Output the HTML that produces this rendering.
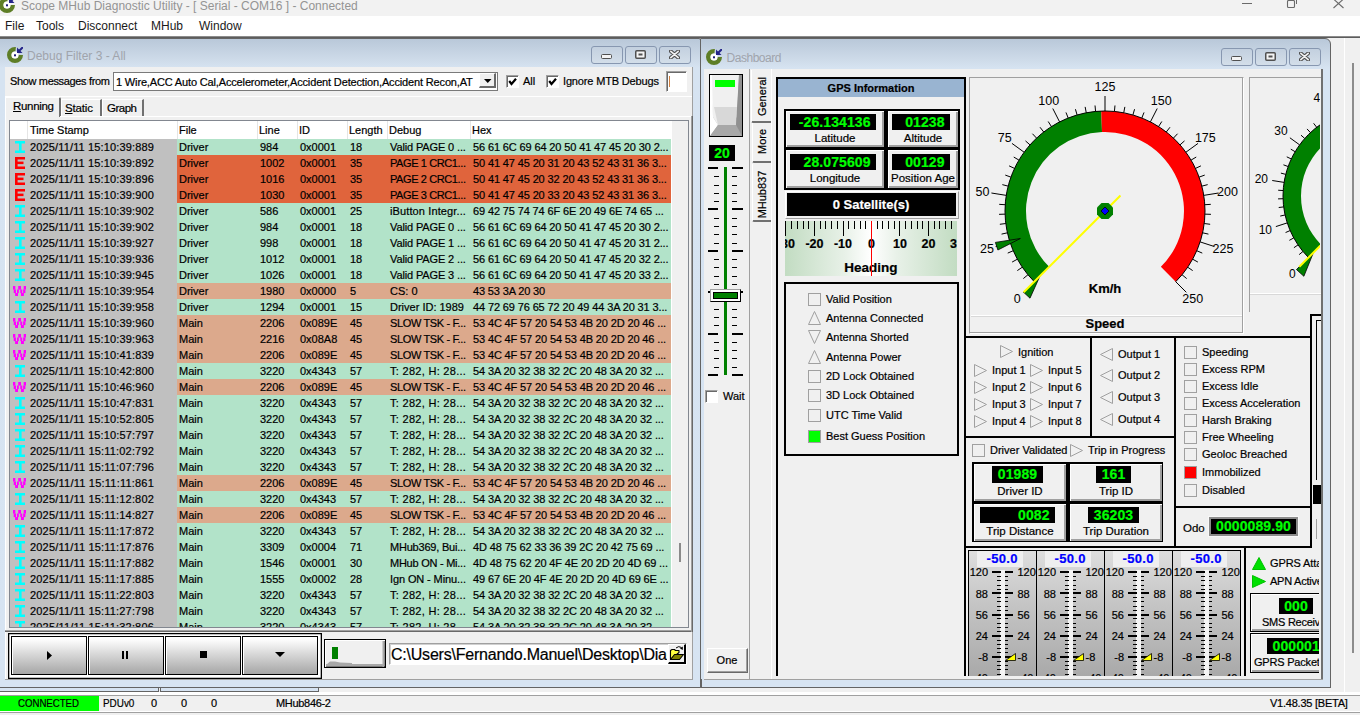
<!DOCTYPE html>
<html><head><meta charset="utf-8"><style>
html,body{margin:0;padding:0;width:1360px;height:715px;overflow:hidden;background:#f0f0f0;position:relative}
body{font-family:"Liberation Sans",sans-serif;font-size:11px;color:#000}
.a{position:absolute;box-sizing:border-box}
.t{white-space:nowrap;-webkit-text-stroke:0.2px currentColor}
svg.a text{font-family:"Liberation Sans",sans-serif}
</style></head><body>
<div class="a" style="left:0px;top:0px;width:1360px;height:16px;background:#f2f2f2"></div>
<svg class="a" style="left:-1px;top:-3px;" width="16" height="16" viewBox="0 0 16 16"><circle cx="8" cy="8" r="5.75" fill="none" stroke="#5e7e26" stroke-width="4.5" stroke-dasharray="27.1 9"/>
<circle cx="8" cy="8" r="3.5" fill="#fff"/>
<rect x="7" y="7.3" width="2" height="2" fill="#1c1c78"/>
<path d="M10 0.5 V6 H15.5 Z" fill="#24248a"/><path d="M12 4 L16 0" stroke="#24248a" stroke-width="2"/></svg>
<div class="a t" style="left:21px;top:-1.0px;line-height:14px;font-size:12px;color:#949494;-webkit-text-stroke:0;">Scope MHub Diagnostic Utility - [ Serial - COM16 ] - Connected</div>
<div class="a" style="left:1242px;top:3px;width:10px;height:1px;background:#6a6a6a"></div>
<svg class="a" style="left:1286px;top:-2px;" width="12" height="10" viewBox="0 0 12 10"><rect x="1.5" y="2.5" width="7" height="7" rx="1" fill="none" stroke="#6a6a6a" stroke-width="1.1"/><path d="M10.5 1 V6" fill="none" stroke="#6a6a6a"/></svg>
<svg class="a" style="left:1333px;top:-1px;" width="11" height="10" viewBox="0 0 11 10"><path d="M0.5 0 L10.5 9 M10.5 0 L0.5 9" stroke="#6a6a6a" stroke-width="1.1"/></svg>
<div class="a" style="left:0px;top:16px;width:1360px;height:20px;background:#fff"></div>
<div class="a t" style="left:5px;top:19.0px;line-height:14px;font-size:12px;-webkit-text-stroke:0;color:#1a1a1a;">File</div>
<div class="a t" style="left:36px;top:19.0px;line-height:14px;font-size:12px;-webkit-text-stroke:0;color:#1a1a1a;">Tools</div>
<div class="a t" style="left:78px;top:19.0px;line-height:14px;font-size:12px;-webkit-text-stroke:0;color:#1a1a1a;">Disconnect</div>
<div class="a t" style="left:151px;top:19.0px;line-height:14px;font-size:12px;-webkit-text-stroke:0;color:#1a1a1a;">MHub</div>
<div class="a t" style="left:199px;top:19.0px;line-height:14px;font-size:12px;-webkit-text-stroke:0;color:#1a1a1a;">Window</div>
<div class="a" style="left:0px;top:36px;width:1360px;height:1px;background:#8c8c8c"></div>
<div class="a" style="left:0px;top:37px;width:1360px;height:1px;background:#5c5c5c"></div>
<div class="a" style="left:0px;top:38px;width:1360px;height:654px;background:#f0f0f0"></div>
<div class="a" style="left:-8px;top:38px;width:709px;height:650px;background:linear-gradient(#b9c8d9, #cfdcea 22px, #d6e3f1 29px, #d7e4f2);border:1px solid #646464;border-top-right-radius:2px;border-top-left-radius:0px;box-sizing:border-box"></div>
<svg class="a" style="left:7px;top:47px;" width="16" height="16" viewBox="0 0 16 16"><circle cx="8" cy="8" r="5.75" fill="none" stroke="#5e7e26" stroke-width="4.5" stroke-dasharray="27.1 9"/>
<circle cx="8" cy="8" r="3.5" fill="#fff"/>
<rect x="7" y="7.3" width="2" height="2" fill="#1c1c78"/>
<path d="M10 0.5 V6 H15.5 Z" fill="#24248a"/><path d="M12 4 L16 0" stroke="#24248a" stroke-width="2"/></svg>
<div class="a t" style="left:27px;top:49.0px;line-height:14px;font-size:12px;color:#a0a4ac;-webkit-text-stroke:0;">Debug Filter 3 - All</div>
<div class="a" style="left:591px;top:46px;width:32px;height:18px;border:1px solid #8797b0;border-radius:3px;box-sizing:border-box;background:linear-gradient(#c3d0df,#d3dee9)"></div>
<div class="a" style="left:601px;top:54px;width:11px;height:5px;background:#f4f4f4;border:1px solid #505050;border-radius:1.5px"></div>
<div class="a" style="left:625px;top:46px;width:32px;height:18px;border:1px solid #8797b0;border-radius:3px;box-sizing:border-box;background:linear-gradient(#c3d0df,#d3dee9)"></div>
<svg class="a" style="left:635px;top:50px;" width="11" height="9" viewBox="0 0 11 9"><rect x="0.75" y="0.75" width="9.5" height="7.5" rx="1" fill="#f4f4f4" stroke="#505050" stroke-width="1.5"/><rect x="3.5" y="3.5" width="4" height="2" fill="#505050"/></svg>
<div class="a" style="left:659px;top:46px;width:32px;height:18px;border:1px solid #8797b0;border-radius:3px;box-sizing:border-box;background:linear-gradient(#c3d0df,#d3dee9)"></div>
<svg class="a" style="left:669px;top:50px;" width="11" height="9" viewBox="0 0 11 9"><path d="M1.8 1.3 L9.2 7.7 M9.2 1.3 L1.8 7.7" stroke="#505050" stroke-width="3.8" stroke-linecap="round"/><path d="M1.8 1.3 L9.2 7.7 M9.2 1.3 L1.8 7.7" stroke="#f2f2f2" stroke-width="1.6" stroke-linecap="round"/></svg>
<div class="a" style="left:5px;top:67px;width:688px;height:613px;background:#f0f0f0;border-right:1px solid #a0a0a0;border-bottom:1px solid #a0a0a0;box-sizing:border-box"></div>
<div class="a" style="left:5px;top:67px;width:688px;height:30px;border-bottom:1px solid #a0a0a0;box-sizing:border-box"></div>
<div class="a" style="left:5px;top:96px;width:687px;height:1px;background:#fff"></div>
<div class="a t" style="left:10px;top:75.0px;line-height:12px;font-size:11px;letter-spacing:-0.342px;">Show messages from</div>
<div class="a" style="left:113px;top:72px;width:385px;height:19px;background:#fff;border:1px solid #7a7a7a;box-sizing:border-box"></div>
<div class="a t" style="left:116px;top:75.5px;line-height:12px;font-size:11px;letter-spacing:-0.151px;">1 Wire,ACC Auto Cal,Accelerometer,Accident Detection,Accident Recon,AT</div>
<div class="a" style="left:479px;top:73px;width:17px;height:15px;background:#f0f0f0;border-right:2px solid #696969;border-bottom:2px solid #696969;border-top:1px solid #fff;border-left:1px solid #fff;box-sizing:border-box"></div>
<svg class="a" style="left:484px;top:79px;" width="8" height="5" viewBox="0 0 8 5"><path d="M0 0 H7.5 L3.75 4 Z" fill="#000"/></svg>
<div class="a" style="left:506px;top:75px;width:13px;height:13px;background:#fff;border-top:1px solid #a0a0a0;border-left:1px solid #a0a0a0;border-right:1px solid #fff;border-bottom:1px solid #fff;box-sizing:border-box;box-shadow:inset 1px 1px 0 #696969"></div>
<svg class="a" style="left:508px;top:77px;" width="9" height="9" viewBox="0 0 9 9"><path d="M1.2 4 L3.5 7 L8 1.8" fill="none" stroke="#000" stroke-width="2.2"/></svg>
<div class="a t" style="left:523px;top:75.0px;line-height:12px;font-size:11px;">All</div>
<div class="a" style="left:546px;top:75px;width:13px;height:13px;background:#fff;border-top:1px solid #a0a0a0;border-left:1px solid #a0a0a0;border-right:1px solid #fff;border-bottom:1px solid #fff;box-sizing:border-box;box-shadow:inset 1px 1px 0 #696969"></div>
<svg class="a" style="left:548px;top:77px;" width="9" height="9" viewBox="0 0 9 9"><path d="M1.2 4 L3.5 7 L8 1.8" fill="none" stroke="#000" stroke-width="2.2"/></svg>
<div class="a t" style="left:563px;top:75.0px;line-height:12px;font-size:11px;letter-spacing:-0.156px;">Ignore MTB Debugs</div>
<div class="a" style="left:666px;top:71px;width:21px;height:21px;background:#fff;border-top:1px solid #a0a0a0;border-left:1px solid #a0a0a0;border-right:1px solid #fff;border-bottom:1px solid #fff;box-sizing:border-box;box-shadow:inset 1px 1px 0 #696969"></div>
<div class="a" style="left:669px;top:76px;width:1px;height:11px;background:#d08040"></div>
<div class="a" style="left:5px;top:97px;width:56px;height:20px;border-left:1px solid #fff;border-top:1px solid #fff;border-right:2px solid #707070;box-sizing:border-box;border-top-right-radius:2px"></div>
<div class="a t" style="left:13px;top:99.8px;line-height:12.5px;font-size:11.5px;letter-spacing:-0.311px;"><u>R</u>unning</div>
<div class="a" style="left:61px;top:99px;width:41px;height:18px;border-left:1px solid #fff;border-top:1px solid #fff;border-right:2px solid #707070;box-sizing:border-box"></div>
<div class="a t" style="left:65px;top:101.8px;line-height:12.5px;font-size:11.5px;letter-spacing:-0.157px;"><u>S</u>tatic</div>
<div class="a" style="left:102px;top:99px;width:42px;height:18px;border-left:1px solid #fff;border-top:1px solid #fff;border-right:2px solid #707070;box-sizing:border-box"></div>
<div class="a t" style="left:107px;top:101.8px;line-height:12.5px;font-size:11.5px;letter-spacing:-0.496px;">Graph</div>
<div class="a" style="left:60px;top:116px;width:633px;height:1px;background:#fff"></div>
<div class="a" style="left:5px;top:97px;width:1px;height:582px;background:#fff"></div>
<div class="a" style="left:9px;top:120px;width:680px;height:508px;border:1px solid #828790;box-sizing:border-box;background:#f0f0f0"></div>
<div class="a" style="left:5px;top:630px;width:688px;height:1px;background:#a0a0a0"></div>
<div class="a" style="left:5px;top:631px;width:688px;height:1px;background:#696969"></div>
<div class="a" style="left:691px;top:116px;width:1px;height:516px;background:#a0a0a0"></div>
<div class="a" style="left:692px;top:116px;width:1px;height:516px;background:#696969"></div>
<div class="a" style="left:10px;top:121px;width:678px;height:506px;overflow:hidden">
<div class="a" style="left:0px;top:0px;width:661px;height:18px;background:#fff"></div>
<div class="a" style="left:17px;top:0px;width:1px;height:18px;background:#e5e5e5"></div>
<div class="a" style="left:167px;top:0px;width:1px;height:18px;background:#e5e5e5"></div>
<div class="a" style="left:247px;top:0px;width:1px;height:18px;background:#e5e5e5"></div>
<div class="a" style="left:287px;top:0px;width:1px;height:18px;background:#e5e5e5"></div>
<div class="a" style="left:337px;top:0px;width:1px;height:18px;background:#e5e5e5"></div>
<div class="a" style="left:377px;top:0px;width:1px;height:18px;background:#e5e5e5"></div>
<div class="a" style="left:460px;top:0px;width:1px;height:18px;background:#e5e5e5"></div>
<div class="a t" style="left:20px;top:2.5px;line-height:12px;font-size:11px;">Time Stamp</div>
<div class="a t" style="left:169px;top:2.5px;line-height:12px;font-size:11px;">File</div>
<div class="a t" style="left:249px;top:2.5px;line-height:12px;font-size:11px;">Line</div>
<div class="a t" style="left:289px;top:2.5px;line-height:12px;font-size:11px;">ID</div>
<div class="a t" style="left:339px;top:2.5px;line-height:12px;font-size:11px;">Length</div>
<div class="a t" style="left:379px;top:2.5px;line-height:12px;font-size:11px;">Debug</div>
<div class="a t" style="left:462px;top:2.5px;line-height:12px;font-size:11px;">Hex</div>
<div class="a" style="left:661px;top:0px;width:17px;height:508px;background:#f0f0f0;border-left:1px solid #ffffff;box-sizing:border-box"></div>
<div class="a" style="left:669px;top:422px;width:2px;height:19px;background:#8a8a8a"></div>
<div class="a" style="left:0px;top:18px;width:167px;height:16px;background:#c0c0c0"></div>
<div class="a" style="left:167px;top:18px;width:494px;height:16px;background:#b2e3c9"></div>
<svg class="a" style="left:5px;top:20px" width="10" height="12"><rect x="0" y="0" width="10" height="2.5" fill="#00ffff"/><rect x="4" y="0" width="2.6" height="12" fill="#00ffff"/><rect x="0" y="9.5" width="10" height="2.5" fill="#00ffff"/></svg>
<div class="a t" style="left:20px;top:20px;line-height:12px;font-size:11px;letter-spacing:0.142px;">2025/11/11 15:10:39:889</div>
<div class="a t" style="left:169px;top:20px;line-height:12px;font-size:11px;">Driver</div>
<div class="a t" style="left:250px;top:20px;line-height:12px;font-size:11px;">984</div>
<div class="a t" style="left:290px;top:20px;line-height:12px;font-size:11px;">0x0001</div>
<div class="a t" style="left:340px;top:20px;line-height:12px;font-size:11px;">18</div>
<div class="a t" style="left:380px;top:20px;line-height:12px;font-size:11px;letter-spacing:-0.129px;">Valid PAGE 0 ...</div>
<div class="a t" style="left:463px;top:20px;line-height:12px;font-size:11px;letter-spacing:-0.129px;">56 61 6C 69 64 20 50 41 47 45 20 30 2...</div>
<div class="a" style="left:0px;top:34px;width:167px;height:16px;background:#c0c0c0"></div>
<div class="a" style="left:167px;top:34px;width:494px;height:16px;background:#e0643c"></div>
<svg class="a" style="left:5px;top:36px" width="10" height="12"><rect x="0" y="0" width="10" height="2.5" fill="#ff0000"/><rect x="0" y="0" width="2.6" height="12" fill="#ff0000"/><rect x="0" y="4.6" width="8.5" height="2.5" fill="#ff0000"/><rect x="0" y="9.5" width="10" height="2.5" fill="#ff0000"/></svg>
<div class="a t" style="left:20px;top:36px;line-height:12px;font-size:11px;letter-spacing:0.142px;">2025/11/11 15:10:39:892</div>
<div class="a t" style="left:169px;top:36px;line-height:12px;font-size:11px;">Driver</div>
<div class="a t" style="left:250px;top:36px;line-height:12px;font-size:11px;">1002</div>
<div class="a t" style="left:290px;top:36px;line-height:12px;font-size:11px;">0x0001</div>
<div class="a t" style="left:340px;top:36px;line-height:12px;font-size:11px;">35</div>
<div class="a t" style="left:380px;top:36px;line-height:12px;font-size:11px;letter-spacing:-0.397px;">PAGE 1 CRC1...</div>
<div class="a t" style="left:463px;top:36px;line-height:12px;font-size:11px;letter-spacing:-0.128px;">50 41 47 45 20 31 20 43 52 43 31 36 3...</div>
<div class="a" style="left:0px;top:50px;width:167px;height:16px;background:#c0c0c0"></div>
<div class="a" style="left:167px;top:50px;width:494px;height:16px;background:#e0643c"></div>
<svg class="a" style="left:5px;top:52px" width="10" height="12"><rect x="0" y="0" width="10" height="2.5" fill="#ff0000"/><rect x="0" y="0" width="2.6" height="12" fill="#ff0000"/><rect x="0" y="4.6" width="8.5" height="2.5" fill="#ff0000"/><rect x="0" y="9.5" width="10" height="2.5" fill="#ff0000"/></svg>
<div class="a t" style="left:20px;top:52px;line-height:12px;font-size:11px;letter-spacing:0.142px;">2025/11/11 15:10:39:896</div>
<div class="a t" style="left:169px;top:52px;line-height:12px;font-size:11px;">Driver</div>
<div class="a t" style="left:250px;top:52px;line-height:12px;font-size:11px;">1016</div>
<div class="a t" style="left:290px;top:52px;line-height:12px;font-size:11px;">0x0001</div>
<div class="a t" style="left:340px;top:52px;line-height:12px;font-size:11px;">35</div>
<div class="a t" style="left:380px;top:52px;line-height:12px;font-size:11px;letter-spacing:-0.397px;">PAGE 2 CRC1...</div>
<div class="a t" style="left:463px;top:52px;line-height:12px;font-size:11px;letter-spacing:-0.128px;">50 41 47 45 20 32 20 43 52 43 31 36 3...</div>
<div class="a" style="left:0px;top:66px;width:167px;height:16px;background:#c0c0c0"></div>
<div class="a" style="left:167px;top:66px;width:494px;height:16px;background:#e0643c"></div>
<svg class="a" style="left:5px;top:68px" width="10" height="12"><rect x="0" y="0" width="10" height="2.5" fill="#ff0000"/><rect x="0" y="0" width="2.6" height="12" fill="#ff0000"/><rect x="0" y="4.6" width="8.5" height="2.5" fill="#ff0000"/><rect x="0" y="9.5" width="10" height="2.5" fill="#ff0000"/></svg>
<div class="a t" style="left:20px;top:68px;line-height:12px;font-size:11px;letter-spacing:0.142px;">2025/11/11 15:10:39:900</div>
<div class="a t" style="left:169px;top:68px;line-height:12px;font-size:11px;">Driver</div>
<div class="a t" style="left:250px;top:68px;line-height:12px;font-size:11px;">1030</div>
<div class="a t" style="left:290px;top:68px;line-height:12px;font-size:11px;">0x0001</div>
<div class="a t" style="left:340px;top:68px;line-height:12px;font-size:11px;">35</div>
<div class="a t" style="left:380px;top:68px;line-height:12px;font-size:11px;letter-spacing:-0.397px;">PAGE 3 CRC1...</div>
<div class="a t" style="left:463px;top:68px;line-height:12px;font-size:11px;letter-spacing:-0.128px;">50 41 47 45 20 33 20 43 52 43 31 36 3...</div>
<div class="a" style="left:0px;top:82px;width:167px;height:16px;background:#c0c0c0"></div>
<div class="a" style="left:167px;top:82px;width:494px;height:16px;background:#b2e3c9"></div>
<svg class="a" style="left:5px;top:84px" width="10" height="12"><rect x="0" y="0" width="10" height="2.5" fill="#00ffff"/><rect x="4" y="0" width="2.6" height="12" fill="#00ffff"/><rect x="0" y="9.5" width="10" height="2.5" fill="#00ffff"/></svg>
<div class="a t" style="left:20px;top:84px;line-height:12px;font-size:11px;letter-spacing:0.142px;">2025/11/11 15:10:39:902</div>
<div class="a t" style="left:169px;top:84px;line-height:12px;font-size:11px;">Driver</div>
<div class="a t" style="left:250px;top:84px;line-height:12px;font-size:11px;">586</div>
<div class="a t" style="left:290px;top:84px;line-height:12px;font-size:11px;">0x0001</div>
<div class="a t" style="left:340px;top:84px;line-height:12px;font-size:11px;">25</div>
<div class="a t" style="left:380px;top:84px;line-height:12px;font-size:11px;letter-spacing:0.120px;">iButton Integr...</div>
<div class="a t" style="left:463px;top:84px;line-height:12px;font-size:11px;letter-spacing:-0.129px;">69 42 75 74 74 6F 6E 20 49 6E 74 65 ...</div>
<div class="a" style="left:0px;top:98px;width:167px;height:16px;background:#c0c0c0"></div>
<div class="a" style="left:167px;top:98px;width:494px;height:16px;background:#b2e3c9"></div>
<svg class="a" style="left:5px;top:100px" width="10" height="12"><rect x="0" y="0" width="10" height="2.5" fill="#00ffff"/><rect x="4" y="0" width="2.6" height="12" fill="#00ffff"/><rect x="0" y="9.5" width="10" height="2.5" fill="#00ffff"/></svg>
<div class="a t" style="left:20px;top:100px;line-height:12px;font-size:11px;letter-spacing:0.142px;">2025/11/11 15:10:39:902</div>
<div class="a t" style="left:169px;top:100px;line-height:12px;font-size:11px;">Driver</div>
<div class="a t" style="left:250px;top:100px;line-height:12px;font-size:11px;">984</div>
<div class="a t" style="left:290px;top:100px;line-height:12px;font-size:11px;">0x0001</div>
<div class="a t" style="left:340px;top:100px;line-height:12px;font-size:11px;">18</div>
<div class="a t" style="left:380px;top:100px;line-height:12px;font-size:11px;letter-spacing:-0.129px;">Valid PAGE 0 ...</div>
<div class="a t" style="left:463px;top:100px;line-height:12px;font-size:11px;letter-spacing:-0.129px;">56 61 6C 69 64 20 50 41 47 45 20 30 2...</div>
<div class="a" style="left:0px;top:114px;width:167px;height:16px;background:#c0c0c0"></div>
<div class="a" style="left:167px;top:114px;width:494px;height:16px;background:#b2e3c9"></div>
<svg class="a" style="left:5px;top:116px" width="10" height="12"><rect x="0" y="0" width="10" height="2.5" fill="#00ffff"/><rect x="4" y="0" width="2.6" height="12" fill="#00ffff"/><rect x="0" y="9.5" width="10" height="2.5" fill="#00ffff"/></svg>
<div class="a t" style="left:20px;top:116px;line-height:12px;font-size:11px;letter-spacing:0.142px;">2025/11/11 15:10:39:927</div>
<div class="a t" style="left:169px;top:116px;line-height:12px;font-size:11px;">Driver</div>
<div class="a t" style="left:250px;top:116px;line-height:12px;font-size:11px;">998</div>
<div class="a t" style="left:290px;top:116px;line-height:12px;font-size:11px;">0x0001</div>
<div class="a t" style="left:340px;top:116px;line-height:12px;font-size:11px;">18</div>
<div class="a t" style="left:380px;top:116px;line-height:12px;font-size:11px;letter-spacing:-0.129px;">Valid PAGE 1 ...</div>
<div class="a t" style="left:463px;top:116px;line-height:12px;font-size:11px;letter-spacing:-0.129px;">56 61 6C 69 64 20 50 41 47 45 20 31 2...</div>
<div class="a" style="left:0px;top:130px;width:167px;height:16px;background:#c0c0c0"></div>
<div class="a" style="left:167px;top:130px;width:494px;height:16px;background:#b2e3c9"></div>
<svg class="a" style="left:5px;top:132px" width="10" height="12"><rect x="0" y="0" width="10" height="2.5" fill="#00ffff"/><rect x="4" y="0" width="2.6" height="12" fill="#00ffff"/><rect x="0" y="9.5" width="10" height="2.5" fill="#00ffff"/></svg>
<div class="a t" style="left:20px;top:132px;line-height:12px;font-size:11px;letter-spacing:0.142px;">2025/11/11 15:10:39:936</div>
<div class="a t" style="left:169px;top:132px;line-height:12px;font-size:11px;">Driver</div>
<div class="a t" style="left:250px;top:132px;line-height:12px;font-size:11px;">1012</div>
<div class="a t" style="left:290px;top:132px;line-height:12px;font-size:11px;">0x0001</div>
<div class="a t" style="left:340px;top:132px;line-height:12px;font-size:11px;">18</div>
<div class="a t" style="left:380px;top:132px;line-height:12px;font-size:11px;letter-spacing:-0.129px;">Valid PAGE 2 ...</div>
<div class="a t" style="left:463px;top:132px;line-height:12px;font-size:11px;letter-spacing:-0.129px;">56 61 6C 69 64 20 50 41 47 45 20 32 2...</div>
<div class="a" style="left:0px;top:146px;width:167px;height:16px;background:#c0c0c0"></div>
<div class="a" style="left:167px;top:146px;width:494px;height:16px;background:#b2e3c9"></div>
<svg class="a" style="left:5px;top:148px" width="10" height="12"><rect x="0" y="0" width="10" height="2.5" fill="#00ffff"/><rect x="4" y="0" width="2.6" height="12" fill="#00ffff"/><rect x="0" y="9.5" width="10" height="2.5" fill="#00ffff"/></svg>
<div class="a t" style="left:20px;top:148px;line-height:12px;font-size:11px;letter-spacing:0.142px;">2025/11/11 15:10:39:945</div>
<div class="a t" style="left:169px;top:148px;line-height:12px;font-size:11px;">Driver</div>
<div class="a t" style="left:250px;top:148px;line-height:12px;font-size:11px;">1026</div>
<div class="a t" style="left:290px;top:148px;line-height:12px;font-size:11px;">0x0001</div>
<div class="a t" style="left:340px;top:148px;line-height:12px;font-size:11px;">18</div>
<div class="a t" style="left:380px;top:148px;line-height:12px;font-size:11px;letter-spacing:-0.129px;">Valid PAGE 3 ...</div>
<div class="a t" style="left:463px;top:148px;line-height:12px;font-size:11px;letter-spacing:-0.129px;">56 61 6C 69 64 20 50 41 47 45 20 33 2...</div>
<div class="a" style="left:0px;top:162px;width:167px;height:16px;background:#c0c0c0"></div>
<div class="a" style="left:167px;top:162px;width:494px;height:16px;background:#dca98c"></div>
<svg class="a" style="left:3px;top:165px" width="14" height="11"><g fill="#ff00ff"><rect x="0" y="0" width="2.3" height="3.6"/><rect x="5.2" y="0" width="2.8" height="3.6"/><rect x="10.7" y="0" width="2.3" height="3.6"/><rect x="0.7" y="3.5" width="2.3" height="3.6"/><rect x="4" y="3.5" width="1.8" height="3.6"/><rect x="7.3" y="3.5" width="1.9" height="3.6"/><rect x="10.1" y="3.5" width="2.3" height="3.6"/><rect x="2.1" y="7" width="2.9" height="3"/><rect x="8" y="7" width="2.9" height="3"/></g></svg>
<div class="a t" style="left:20px;top:164px;line-height:12px;font-size:11px;letter-spacing:0.142px;">2025/11/11 15:10:39:954</div>
<div class="a t" style="left:169px;top:164px;line-height:12px;font-size:11px;">Driver</div>
<div class="a t" style="left:250px;top:164px;line-height:12px;font-size:11px;">1980</div>
<div class="a t" style="left:290px;top:164px;line-height:12px;font-size:11px;">0x0000</div>
<div class="a t" style="left:340px;top:164px;line-height:12px;font-size:11px;">5</div>
<div class="a t" style="left:380px;top:164px;line-height:12px;font-size:11px;">CS: 0</div>
<div class="a t" style="left:463px;top:164px;line-height:12px;font-size:11px;letter-spacing:-0.143px;">43 53 3A 20 30</div>
<div class="a" style="left:0px;top:178px;width:167px;height:16px;background:#c0c0c0"></div>
<div class="a" style="left:167px;top:178px;width:494px;height:16px;background:#b2e3c9"></div>
<svg class="a" style="left:5px;top:180px" width="10" height="12"><rect x="0" y="0" width="10" height="2.5" fill="#00ffff"/><rect x="4" y="0" width="2.6" height="12" fill="#00ffff"/><rect x="0" y="9.5" width="10" height="2.5" fill="#00ffff"/></svg>
<div class="a t" style="left:20px;top:180px;line-height:12px;font-size:11px;letter-spacing:0.142px;">2025/11/11 15:10:39:958</div>
<div class="a t" style="left:169px;top:180px;line-height:12px;font-size:11px;">Driver</div>
<div class="a t" style="left:250px;top:180px;line-height:12px;font-size:11px;">1294</div>
<div class="a t" style="left:290px;top:180px;line-height:12px;font-size:11px;">0x0001</div>
<div class="a t" style="left:340px;top:180px;line-height:12px;font-size:11px;">15</div>
<div class="a t" style="left:380px;top:180px;line-height:12px;font-size:11px;">Driver ID: 1989</div>
<div class="a t" style="left:463px;top:180px;line-height:12px;font-size:11px;letter-spacing:-0.128px;">44 72 69 76 65 72 20 49 44 3A 20 31 3...</div>
<div class="a" style="left:0px;top:194px;width:167px;height:16px;background:#c0c0c0"></div>
<div class="a" style="left:167px;top:194px;width:494px;height:16px;background:#dca98c"></div>
<svg class="a" style="left:3px;top:197px" width="14" height="11"><g fill="#ff00ff"><rect x="0" y="0" width="2.3" height="3.6"/><rect x="5.2" y="0" width="2.8" height="3.6"/><rect x="10.7" y="0" width="2.3" height="3.6"/><rect x="0.7" y="3.5" width="2.3" height="3.6"/><rect x="4" y="3.5" width="1.8" height="3.6"/><rect x="7.3" y="3.5" width="1.9" height="3.6"/><rect x="10.1" y="3.5" width="2.3" height="3.6"/><rect x="2.1" y="7" width="2.9" height="3"/><rect x="8" y="7" width="2.9" height="3"/></g></svg>
<div class="a t" style="left:20px;top:196px;line-height:12px;font-size:11px;letter-spacing:0.142px;">2025/11/11 15:10:39:960</div>
<div class="a t" style="left:169px;top:196px;line-height:12px;font-size:11px;">Main</div>
<div class="a t" style="left:250px;top:196px;line-height:12px;font-size:11px;">2206</div>
<div class="a t" style="left:290px;top:196px;line-height:12px;font-size:11px;">0x089E</div>
<div class="a t" style="left:340px;top:196px;line-height:12px;font-size:11px;">45</div>
<div class="a t" style="left:380px;top:196px;line-height:12px;font-size:11px;letter-spacing:-0.367px;">SLOW TSK - F...</div>
<div class="a t" style="left:463px;top:196px;line-height:12px;font-size:11px;letter-spacing:-0.131px;">53 4C 4F 57 20 54 53 4B 20 2D 20 46 ...</div>
<div class="a" style="left:0px;top:210px;width:167px;height:16px;background:#c0c0c0"></div>
<div class="a" style="left:167px;top:210px;width:494px;height:16px;background:#dca98c"></div>
<svg class="a" style="left:3px;top:213px" width="14" height="11"><g fill="#ff00ff"><rect x="0" y="0" width="2.3" height="3.6"/><rect x="5.2" y="0" width="2.8" height="3.6"/><rect x="10.7" y="0" width="2.3" height="3.6"/><rect x="0.7" y="3.5" width="2.3" height="3.6"/><rect x="4" y="3.5" width="1.8" height="3.6"/><rect x="7.3" y="3.5" width="1.9" height="3.6"/><rect x="10.1" y="3.5" width="2.3" height="3.6"/><rect x="2.1" y="7" width="2.9" height="3"/><rect x="8" y="7" width="2.9" height="3"/></g></svg>
<div class="a t" style="left:20px;top:212px;line-height:12px;font-size:11px;letter-spacing:0.142px;">2025/11/11 15:10:39:963</div>
<div class="a t" style="left:169px;top:212px;line-height:12px;font-size:11px;">Main</div>
<div class="a t" style="left:250px;top:212px;line-height:12px;font-size:11px;">2216</div>
<div class="a t" style="left:290px;top:212px;line-height:12px;font-size:11px;">0x08A8</div>
<div class="a t" style="left:340px;top:212px;line-height:12px;font-size:11px;">45</div>
<div class="a t" style="left:380px;top:212px;line-height:12px;font-size:11px;letter-spacing:-0.367px;">SLOW TSK - F...</div>
<div class="a t" style="left:463px;top:212px;line-height:12px;font-size:11px;letter-spacing:-0.131px;">53 4C 4F 57 20 54 53 4B 20 2D 20 46 ...</div>
<div class="a" style="left:0px;top:226px;width:167px;height:16px;background:#c0c0c0"></div>
<div class="a" style="left:167px;top:226px;width:494px;height:16px;background:#dca98c"></div>
<svg class="a" style="left:3px;top:229px" width="14" height="11"><g fill="#ff00ff"><rect x="0" y="0" width="2.3" height="3.6"/><rect x="5.2" y="0" width="2.8" height="3.6"/><rect x="10.7" y="0" width="2.3" height="3.6"/><rect x="0.7" y="3.5" width="2.3" height="3.6"/><rect x="4" y="3.5" width="1.8" height="3.6"/><rect x="7.3" y="3.5" width="1.9" height="3.6"/><rect x="10.1" y="3.5" width="2.3" height="3.6"/><rect x="2.1" y="7" width="2.9" height="3"/><rect x="8" y="7" width="2.9" height="3"/></g></svg>
<div class="a t" style="left:20px;top:228px;line-height:12px;font-size:11px;letter-spacing:0.142px;">2025/11/11 15:10:41:839</div>
<div class="a t" style="left:169px;top:228px;line-height:12px;font-size:11px;">Main</div>
<div class="a t" style="left:250px;top:228px;line-height:12px;font-size:11px;">2206</div>
<div class="a t" style="left:290px;top:228px;line-height:12px;font-size:11px;">0x089E</div>
<div class="a t" style="left:340px;top:228px;line-height:12px;font-size:11px;">45</div>
<div class="a t" style="left:380px;top:228px;line-height:12px;font-size:11px;letter-spacing:-0.367px;">SLOW TSK - F...</div>
<div class="a t" style="left:463px;top:228px;line-height:12px;font-size:11px;letter-spacing:-0.131px;">53 4C 4F 57 20 54 53 4B 20 2D 20 46 ...</div>
<div class="a" style="left:0px;top:242px;width:167px;height:16px;background:#c0c0c0"></div>
<div class="a" style="left:167px;top:242px;width:494px;height:16px;background:#b2e3c9"></div>
<svg class="a" style="left:5px;top:244px" width="10" height="12"><rect x="0" y="0" width="10" height="2.5" fill="#00ffff"/><rect x="4" y="0" width="2.6" height="12" fill="#00ffff"/><rect x="0" y="9.5" width="10" height="2.5" fill="#00ffff"/></svg>
<div class="a t" style="left:20px;top:244px;line-height:12px;font-size:11px;letter-spacing:0.142px;">2025/11/11 15:10:42:800</div>
<div class="a t" style="left:169px;top:244px;line-height:12px;font-size:11px;">Main</div>
<div class="a t" style="left:250px;top:244px;line-height:12px;font-size:11px;">3220</div>
<div class="a t" style="left:290px;top:244px;line-height:12px;font-size:11px;">0x4343</div>
<div class="a t" style="left:340px;top:244px;line-height:12px;font-size:11px;">57</div>
<div class="a t" style="left:380px;top:244px;line-height:12px;font-size:11px;letter-spacing:0.292px;">T: 282, H: 28...</div>
<div class="a t" style="left:463px;top:244px;line-height:12px;font-size:11px;letter-spacing:-0.129px;">54 3A 20 32 38 32 2C 20 48 3A 20 32 ...</div>
<div class="a" style="left:0px;top:258px;width:167px;height:16px;background:#c0c0c0"></div>
<div class="a" style="left:167px;top:258px;width:494px;height:16px;background:#dca98c"></div>
<svg class="a" style="left:3px;top:261px" width="14" height="11"><g fill="#ff00ff"><rect x="0" y="0" width="2.3" height="3.6"/><rect x="5.2" y="0" width="2.8" height="3.6"/><rect x="10.7" y="0" width="2.3" height="3.6"/><rect x="0.7" y="3.5" width="2.3" height="3.6"/><rect x="4" y="3.5" width="1.8" height="3.6"/><rect x="7.3" y="3.5" width="1.9" height="3.6"/><rect x="10.1" y="3.5" width="2.3" height="3.6"/><rect x="2.1" y="7" width="2.9" height="3"/><rect x="8" y="7" width="2.9" height="3"/></g></svg>
<div class="a t" style="left:20px;top:260px;line-height:12px;font-size:11px;letter-spacing:0.142px;">2025/11/11 15:10:46:960</div>
<div class="a t" style="left:169px;top:260px;line-height:12px;font-size:11px;">Main</div>
<div class="a t" style="left:250px;top:260px;line-height:12px;font-size:11px;">2206</div>
<div class="a t" style="left:290px;top:260px;line-height:12px;font-size:11px;">0x089E</div>
<div class="a t" style="left:340px;top:260px;line-height:12px;font-size:11px;">45</div>
<div class="a t" style="left:380px;top:260px;line-height:12px;font-size:11px;letter-spacing:-0.367px;">SLOW TSK - F...</div>
<div class="a t" style="left:463px;top:260px;line-height:12px;font-size:11px;letter-spacing:-0.131px;">53 4C 4F 57 20 54 53 4B 20 2D 20 46 ...</div>
<div class="a" style="left:0px;top:274px;width:167px;height:16px;background:#c0c0c0"></div>
<div class="a" style="left:167px;top:274px;width:494px;height:16px;background:#b2e3c9"></div>
<svg class="a" style="left:5px;top:276px" width="10" height="12"><rect x="0" y="0" width="10" height="2.5" fill="#00ffff"/><rect x="4" y="0" width="2.6" height="12" fill="#00ffff"/><rect x="0" y="9.5" width="10" height="2.5" fill="#00ffff"/></svg>
<div class="a t" style="left:20px;top:276px;line-height:12px;font-size:11px;letter-spacing:0.142px;">2025/11/11 15:10:47:831</div>
<div class="a t" style="left:169px;top:276px;line-height:12px;font-size:11px;">Main</div>
<div class="a t" style="left:250px;top:276px;line-height:12px;font-size:11px;">3220</div>
<div class="a t" style="left:290px;top:276px;line-height:12px;font-size:11px;">0x4343</div>
<div class="a t" style="left:340px;top:276px;line-height:12px;font-size:11px;">57</div>
<div class="a t" style="left:380px;top:276px;line-height:12px;font-size:11px;letter-spacing:0.292px;">T: 282, H: 28...</div>
<div class="a t" style="left:463px;top:276px;line-height:12px;font-size:11px;letter-spacing:-0.129px;">54 3A 20 32 38 32 2C 20 48 3A 20 32 ...</div>
<div class="a" style="left:0px;top:290px;width:167px;height:16px;background:#c0c0c0"></div>
<div class="a" style="left:167px;top:290px;width:494px;height:16px;background:#b2e3c9"></div>
<svg class="a" style="left:5px;top:292px" width="10" height="12"><rect x="0" y="0" width="10" height="2.5" fill="#00ffff"/><rect x="4" y="0" width="2.6" height="12" fill="#00ffff"/><rect x="0" y="9.5" width="10" height="2.5" fill="#00ffff"/></svg>
<div class="a t" style="left:20px;top:292px;line-height:12px;font-size:11px;letter-spacing:0.142px;">2025/11/11 15:10:52:805</div>
<div class="a t" style="left:169px;top:292px;line-height:12px;font-size:11px;">Main</div>
<div class="a t" style="left:250px;top:292px;line-height:12px;font-size:11px;">3220</div>
<div class="a t" style="left:290px;top:292px;line-height:12px;font-size:11px;">0x4343</div>
<div class="a t" style="left:340px;top:292px;line-height:12px;font-size:11px;">57</div>
<div class="a t" style="left:380px;top:292px;line-height:12px;font-size:11px;letter-spacing:0.292px;">T: 282, H: 28...</div>
<div class="a t" style="left:463px;top:292px;line-height:12px;font-size:11px;letter-spacing:-0.129px;">54 3A 20 32 38 32 2C 20 48 3A 20 32 ...</div>
<div class="a" style="left:0px;top:306px;width:167px;height:16px;background:#c0c0c0"></div>
<div class="a" style="left:167px;top:306px;width:494px;height:16px;background:#b2e3c9"></div>
<svg class="a" style="left:5px;top:308px" width="10" height="12"><rect x="0" y="0" width="10" height="2.5" fill="#00ffff"/><rect x="4" y="0" width="2.6" height="12" fill="#00ffff"/><rect x="0" y="9.5" width="10" height="2.5" fill="#00ffff"/></svg>
<div class="a t" style="left:20px;top:308px;line-height:12px;font-size:11px;letter-spacing:0.142px;">2025/11/11 15:10:57:797</div>
<div class="a t" style="left:169px;top:308px;line-height:12px;font-size:11px;">Main</div>
<div class="a t" style="left:250px;top:308px;line-height:12px;font-size:11px;">3220</div>
<div class="a t" style="left:290px;top:308px;line-height:12px;font-size:11px;">0x4343</div>
<div class="a t" style="left:340px;top:308px;line-height:12px;font-size:11px;">57</div>
<div class="a t" style="left:380px;top:308px;line-height:12px;font-size:11px;letter-spacing:0.292px;">T: 282, H: 28...</div>
<div class="a t" style="left:463px;top:308px;line-height:12px;font-size:11px;letter-spacing:-0.129px;">54 3A 20 32 38 32 2C 20 48 3A 20 32 ...</div>
<div class="a" style="left:0px;top:322px;width:167px;height:16px;background:#c0c0c0"></div>
<div class="a" style="left:167px;top:322px;width:494px;height:16px;background:#b2e3c9"></div>
<svg class="a" style="left:5px;top:324px" width="10" height="12"><rect x="0" y="0" width="10" height="2.5" fill="#00ffff"/><rect x="4" y="0" width="2.6" height="12" fill="#00ffff"/><rect x="0" y="9.5" width="10" height="2.5" fill="#00ffff"/></svg>
<div class="a t" style="left:20px;top:324px;line-height:12px;font-size:11px;letter-spacing:0.179px;">2025/11/11 15:11:02:792</div>
<div class="a t" style="left:169px;top:324px;line-height:12px;font-size:11px;">Main</div>
<div class="a t" style="left:250px;top:324px;line-height:12px;font-size:11px;">3220</div>
<div class="a t" style="left:290px;top:324px;line-height:12px;font-size:11px;">0x4343</div>
<div class="a t" style="left:340px;top:324px;line-height:12px;font-size:11px;">57</div>
<div class="a t" style="left:380px;top:324px;line-height:12px;font-size:11px;letter-spacing:0.292px;">T: 282, H: 28...</div>
<div class="a t" style="left:463px;top:324px;line-height:12px;font-size:11px;letter-spacing:-0.129px;">54 3A 20 32 38 32 2C 20 48 3A 20 32 ...</div>
<div class="a" style="left:0px;top:338px;width:167px;height:16px;background:#c0c0c0"></div>
<div class="a" style="left:167px;top:338px;width:494px;height:16px;background:#b2e3c9"></div>
<svg class="a" style="left:5px;top:340px" width="10" height="12"><rect x="0" y="0" width="10" height="2.5" fill="#00ffff"/><rect x="4" y="0" width="2.6" height="12" fill="#00ffff"/><rect x="0" y="9.5" width="10" height="2.5" fill="#00ffff"/></svg>
<div class="a t" style="left:20px;top:340px;line-height:12px;font-size:11px;letter-spacing:0.179px;">2025/11/11 15:11:07:796</div>
<div class="a t" style="left:169px;top:340px;line-height:12px;font-size:11px;">Main</div>
<div class="a t" style="left:250px;top:340px;line-height:12px;font-size:11px;">3220</div>
<div class="a t" style="left:290px;top:340px;line-height:12px;font-size:11px;">0x4343</div>
<div class="a t" style="left:340px;top:340px;line-height:12px;font-size:11px;">57</div>
<div class="a t" style="left:380px;top:340px;line-height:12px;font-size:11px;letter-spacing:0.292px;">T: 282, H: 28...</div>
<div class="a t" style="left:463px;top:340px;line-height:12px;font-size:11px;letter-spacing:-0.129px;">54 3A 20 32 38 32 2C 20 48 3A 20 32 ...</div>
<div class="a" style="left:0px;top:354px;width:167px;height:16px;background:#c0c0c0"></div>
<div class="a" style="left:167px;top:354px;width:494px;height:16px;background:#dca98c"></div>
<svg class="a" style="left:3px;top:357px" width="14" height="11"><g fill="#ff00ff"><rect x="0" y="0" width="2.3" height="3.6"/><rect x="5.2" y="0" width="2.8" height="3.6"/><rect x="10.7" y="0" width="2.3" height="3.6"/><rect x="0.7" y="3.5" width="2.3" height="3.6"/><rect x="4" y="3.5" width="1.8" height="3.6"/><rect x="7.3" y="3.5" width="1.9" height="3.6"/><rect x="10.1" y="3.5" width="2.3" height="3.6"/><rect x="2.1" y="7" width="2.9" height="3"/><rect x="8" y="7" width="2.9" height="3"/></g></svg>
<div class="a t" style="left:20px;top:356px;line-height:12px;font-size:11px;letter-spacing:0.216px;">2025/11/11 15:11:11:861</div>
<div class="a t" style="left:169px;top:356px;line-height:12px;font-size:11px;">Main</div>
<div class="a t" style="left:250px;top:356px;line-height:12px;font-size:11px;">2206</div>
<div class="a t" style="left:290px;top:356px;line-height:12px;font-size:11px;">0x089E</div>
<div class="a t" style="left:340px;top:356px;line-height:12px;font-size:11px;">45</div>
<div class="a t" style="left:380px;top:356px;line-height:12px;font-size:11px;letter-spacing:-0.367px;">SLOW TSK - F...</div>
<div class="a t" style="left:463px;top:356px;line-height:12px;font-size:11px;letter-spacing:-0.131px;">53 4C 4F 57 20 54 53 4B 20 2D 20 46 ...</div>
<div class="a" style="left:0px;top:370px;width:167px;height:16px;background:#c0c0c0"></div>
<div class="a" style="left:167px;top:370px;width:494px;height:16px;background:#b2e3c9"></div>
<svg class="a" style="left:5px;top:372px" width="10" height="12"><rect x="0" y="0" width="10" height="2.5" fill="#00ffff"/><rect x="4" y="0" width="2.6" height="12" fill="#00ffff"/><rect x="0" y="9.5" width="10" height="2.5" fill="#00ffff"/></svg>
<div class="a t" style="left:20px;top:372px;line-height:12px;font-size:11px;letter-spacing:0.179px;">2025/11/11 15:11:12:802</div>
<div class="a t" style="left:169px;top:372px;line-height:12px;font-size:11px;">Main</div>
<div class="a t" style="left:250px;top:372px;line-height:12px;font-size:11px;">3220</div>
<div class="a t" style="left:290px;top:372px;line-height:12px;font-size:11px;">0x4343</div>
<div class="a t" style="left:340px;top:372px;line-height:12px;font-size:11px;">57</div>
<div class="a t" style="left:380px;top:372px;line-height:12px;font-size:11px;letter-spacing:0.292px;">T: 282, H: 28...</div>
<div class="a t" style="left:463px;top:372px;line-height:12px;font-size:11px;letter-spacing:-0.129px;">54 3A 20 32 38 32 2C 20 48 3A 20 32 ...</div>
<div class="a" style="left:0px;top:386px;width:167px;height:16px;background:#c0c0c0"></div>
<div class="a" style="left:167px;top:386px;width:494px;height:16px;background:#dca98c"></div>
<svg class="a" style="left:3px;top:389px" width="14" height="11"><g fill="#ff00ff"><rect x="0" y="0" width="2.3" height="3.6"/><rect x="5.2" y="0" width="2.8" height="3.6"/><rect x="10.7" y="0" width="2.3" height="3.6"/><rect x="0.7" y="3.5" width="2.3" height="3.6"/><rect x="4" y="3.5" width="1.8" height="3.6"/><rect x="7.3" y="3.5" width="1.9" height="3.6"/><rect x="10.1" y="3.5" width="2.3" height="3.6"/><rect x="2.1" y="7" width="2.9" height="3"/><rect x="8" y="7" width="2.9" height="3"/></g></svg>
<div class="a t" style="left:20px;top:388px;line-height:12px;font-size:11px;letter-spacing:0.179px;">2025/11/11 15:11:14:827</div>
<div class="a t" style="left:169px;top:388px;line-height:12px;font-size:11px;">Main</div>
<div class="a t" style="left:250px;top:388px;line-height:12px;font-size:11px;">2206</div>
<div class="a t" style="left:290px;top:388px;line-height:12px;font-size:11px;">0x089E</div>
<div class="a t" style="left:340px;top:388px;line-height:12px;font-size:11px;">45</div>
<div class="a t" style="left:380px;top:388px;line-height:12px;font-size:11px;letter-spacing:-0.367px;">SLOW TSK - F...</div>
<div class="a t" style="left:463px;top:388px;line-height:12px;font-size:11px;letter-spacing:-0.131px;">53 4C 4F 57 20 54 53 4B 20 2D 20 46 ...</div>
<div class="a" style="left:0px;top:402px;width:167px;height:16px;background:#c0c0c0"></div>
<div class="a" style="left:167px;top:402px;width:494px;height:16px;background:#b2e3c9"></div>
<svg class="a" style="left:5px;top:404px" width="10" height="12"><rect x="0" y="0" width="10" height="2.5" fill="#00ffff"/><rect x="4" y="0" width="2.6" height="12" fill="#00ffff"/><rect x="0" y="9.5" width="10" height="2.5" fill="#00ffff"/></svg>
<div class="a t" style="left:20px;top:404px;line-height:12px;font-size:11px;letter-spacing:0.179px;">2025/11/11 15:11:17:872</div>
<div class="a t" style="left:169px;top:404px;line-height:12px;font-size:11px;">Main</div>
<div class="a t" style="left:250px;top:404px;line-height:12px;font-size:11px;">3220</div>
<div class="a t" style="left:290px;top:404px;line-height:12px;font-size:11px;">0x4343</div>
<div class="a t" style="left:340px;top:404px;line-height:12px;font-size:11px;">57</div>
<div class="a t" style="left:380px;top:404px;line-height:12px;font-size:11px;letter-spacing:0.292px;">T: 282, H: 28...</div>
<div class="a t" style="left:463px;top:404px;line-height:12px;font-size:11px;letter-spacing:-0.129px;">54 3A 20 32 38 32 2C 20 48 3A 20 32 ...</div>
<div class="a" style="left:0px;top:418px;width:167px;height:16px;background:#c0c0c0"></div>
<div class="a" style="left:167px;top:418px;width:494px;height:16px;background:#b2e3c9"></div>
<svg class="a" style="left:5px;top:420px" width="10" height="12"><rect x="0" y="0" width="10" height="2.5" fill="#00ffff"/><rect x="4" y="0" width="2.6" height="12" fill="#00ffff"/><rect x="0" y="9.5" width="10" height="2.5" fill="#00ffff"/></svg>
<div class="a t" style="left:20px;top:420px;line-height:12px;font-size:11px;letter-spacing:0.179px;">2025/11/11 15:11:17:876</div>
<div class="a t" style="left:169px;top:420px;line-height:12px;font-size:11px;">Main</div>
<div class="a t" style="left:250px;top:420px;line-height:12px;font-size:11px;">3309</div>
<div class="a t" style="left:290px;top:420px;line-height:12px;font-size:11px;">0x0004</div>
<div class="a t" style="left:340px;top:420px;line-height:12px;font-size:11px;">71</div>
<div class="a t" style="left:380px;top:420px;line-height:12px;font-size:11px;letter-spacing:-0.210px;">MHub369, Bui...</div>
<div class="a t" style="left:463px;top:420px;line-height:12px;font-size:11px;letter-spacing:-0.129px;">4D 48 75 62 33 36 39 2C 20 42 75 69 ...</div>
<div class="a" style="left:0px;top:434px;width:167px;height:16px;background:#c0c0c0"></div>
<div class="a" style="left:167px;top:434px;width:494px;height:16px;background:#b2e3c9"></div>
<svg class="a" style="left:5px;top:436px" width="10" height="12"><rect x="0" y="0" width="10" height="2.5" fill="#00ffff"/><rect x="4" y="0" width="2.6" height="12" fill="#00ffff"/><rect x="0" y="9.5" width="10" height="2.5" fill="#00ffff"/></svg>
<div class="a t" style="left:20px;top:436px;line-height:12px;font-size:11px;letter-spacing:0.179px;">2025/11/11 15:11:17:882</div>
<div class="a t" style="left:169px;top:436px;line-height:12px;font-size:11px;">Main</div>
<div class="a t" style="left:250px;top:436px;line-height:12px;font-size:11px;">1546</div>
<div class="a t" style="left:290px;top:436px;line-height:12px;font-size:11px;">0x0001</div>
<div class="a t" style="left:340px;top:436px;line-height:12px;font-size:11px;">30</div>
<div class="a t" style="left:380px;top:436px;line-height:12px;font-size:11px;letter-spacing:-0.248px;">MHub ON - Mi...</div>
<div class="a t" style="left:463px;top:436px;line-height:12px;font-size:11px;letter-spacing:-0.132px;">4D 48 75 62 20 4F 4E 20 2D 20 4D 69 ...</div>
<div class="a" style="left:0px;top:450px;width:167px;height:16px;background:#c0c0c0"></div>
<div class="a" style="left:167px;top:450px;width:494px;height:16px;background:#b2e3c9"></div>
<svg class="a" style="left:5px;top:452px" width="10" height="12"><rect x="0" y="0" width="10" height="2.5" fill="#00ffff"/><rect x="4" y="0" width="2.6" height="12" fill="#00ffff"/><rect x="0" y="9.5" width="10" height="2.5" fill="#00ffff"/></svg>
<div class="a t" style="left:20px;top:452px;line-height:12px;font-size:11px;letter-spacing:0.179px;">2025/11/11 15:11:17:885</div>
<div class="a t" style="left:169px;top:452px;line-height:12px;font-size:11px;">Main</div>
<div class="a t" style="left:250px;top:452px;line-height:12px;font-size:11px;">1555</div>
<div class="a t" style="left:290px;top:452px;line-height:12px;font-size:11px;">0x0002</div>
<div class="a t" style="left:340px;top:452px;line-height:12px;font-size:11px;">28</div>
<div class="a t" style="left:380px;top:452px;line-height:12px;font-size:11px;letter-spacing:-0.113px;">Ign ON - Minu...</div>
<div class="a t" style="left:463px;top:452px;line-height:12px;font-size:11px;letter-spacing:-0.132px;">49 67 6E 20 4F 4E 20 2D 20 4D 69 6E ...</div>
<div class="a" style="left:0px;top:466px;width:167px;height:16px;background:#c0c0c0"></div>
<div class="a" style="left:167px;top:466px;width:494px;height:16px;background:#b2e3c9"></div>
<svg class="a" style="left:5px;top:468px" width="10" height="12"><rect x="0" y="0" width="10" height="2.5" fill="#00ffff"/><rect x="4" y="0" width="2.6" height="12" fill="#00ffff"/><rect x="0" y="9.5" width="10" height="2.5" fill="#00ffff"/></svg>
<div class="a t" style="left:20px;top:468px;line-height:12px;font-size:11px;letter-spacing:0.179px;">2025/11/11 15:11:22:803</div>
<div class="a t" style="left:169px;top:468px;line-height:12px;font-size:11px;">Main</div>
<div class="a t" style="left:250px;top:468px;line-height:12px;font-size:11px;">3220</div>
<div class="a t" style="left:290px;top:468px;line-height:12px;font-size:11px;">0x4343</div>
<div class="a t" style="left:340px;top:468px;line-height:12px;font-size:11px;">57</div>
<div class="a t" style="left:380px;top:468px;line-height:12px;font-size:11px;letter-spacing:0.292px;">T: 282, H: 28...</div>
<div class="a t" style="left:463px;top:468px;line-height:12px;font-size:11px;letter-spacing:-0.129px;">54 3A 20 32 38 32 2C 20 48 3A 20 32 ...</div>
<div class="a" style="left:0px;top:482px;width:167px;height:16px;background:#c0c0c0"></div>
<div class="a" style="left:167px;top:482px;width:494px;height:16px;background:#b2e3c9"></div>
<svg class="a" style="left:5px;top:484px" width="10" height="12"><rect x="0" y="0" width="10" height="2.5" fill="#00ffff"/><rect x="4" y="0" width="2.6" height="12" fill="#00ffff"/><rect x="0" y="9.5" width="10" height="2.5" fill="#00ffff"/></svg>
<div class="a t" style="left:20px;top:484px;line-height:12px;font-size:11px;letter-spacing:0.179px;">2025/11/11 15:11:27:798</div>
<div class="a t" style="left:169px;top:484px;line-height:12px;font-size:11px;">Main</div>
<div class="a t" style="left:250px;top:484px;line-height:12px;font-size:11px;">3220</div>
<div class="a t" style="left:290px;top:484px;line-height:12px;font-size:11px;">0x4343</div>
<div class="a t" style="left:340px;top:484px;line-height:12px;font-size:11px;">57</div>
<div class="a t" style="left:380px;top:484px;line-height:12px;font-size:11px;letter-spacing:0.292px;">T: 282, H: 28...</div>
<div class="a t" style="left:463px;top:484px;line-height:12px;font-size:11px;letter-spacing:-0.129px;">54 3A 20 32 38 32 2C 20 48 3A 20 32 ...</div>
<div class="a" style="left:0px;top:498px;width:167px;height:16px;background:#c0c0c0"></div>
<div class="a" style="left:167px;top:498px;width:494px;height:16px;background:#b2e3c9"></div>
<svg class="a" style="left:5px;top:500px" width="10" height="12"><rect x="0" y="0" width="10" height="2.5" fill="#00ffff"/><rect x="4" y="0" width="2.6" height="12" fill="#00ffff"/><rect x="0" y="9.5" width="10" height="2.5" fill="#00ffff"/></svg>
<div class="a t" style="left:20px;top:500px;line-height:12px;font-size:11px;letter-spacing:0.179px;">2025/11/11 15:11:32:806</div>
<div class="a t" style="left:169px;top:500px;line-height:12px;font-size:11px;">Main</div>
<div class="a t" style="left:250px;top:500px;line-height:12px;font-size:11px;">3220</div>
<div class="a t" style="left:290px;top:500px;line-height:12px;font-size:11px;">0x4343</div>
<div class="a t" style="left:340px;top:500px;line-height:12px;font-size:11px;">57</div>
<div class="a t" style="left:380px;top:500px;line-height:12px;font-size:11px;letter-spacing:0.292px;">T: 282, H: 28...</div>
<div class="a t" style="left:463px;top:500px;line-height:12px;font-size:11px;letter-spacing:-0.129px;">54 3A 20 32 38 32 2C 20 48 3A 20 32 ...</div>
</div>
<div class="a" style="left:8px;top:633px;width:314px;height:46px;border:1px solid #000;box-shadow:inset 0 0 0 0.3px #000;box-sizing:border-box;background:#fff"></div>
<div class="a" style="left:11px;top:636px;width:76px;height:39px;border:1px solid #000;border-right-width:1.5px;border-bottom-width:1.5px;box-sizing:border-box;box-shadow:inset 1px 1px 0 #fff;background:linear-gradient(#fff 5%, #d9d9d9 45%, #a6a6a6)"></div>
<div class="a" style="left:88px;top:636px;width:76px;height:39px;border:1px solid #000;border-right-width:1.5px;border-bottom-width:1.5px;box-sizing:border-box;box-shadow:inset 1px 1px 0 #fff;background:linear-gradient(#fff 5%, #d9d9d9 45%, #a6a6a6)"></div>
<div class="a" style="left:165px;top:636px;width:76px;height:39px;border:1px solid #000;border-right-width:1.5px;border-bottom-width:1.5px;box-sizing:border-box;box-shadow:inset 1px 1px 0 #fff;background:linear-gradient(#fff 5%, #d9d9d9 45%, #a6a6a6)"></div>
<div class="a" style="left:242px;top:636px;width:76px;height:39px;border:1px solid #000;border-right-width:1.5px;border-bottom-width:1.5px;box-sizing:border-box;box-shadow:inset 1px 1px 0 #fff;background:linear-gradient(#fff 5%, #d9d9d9 45%, #a6a6a6)"></div>
<svg class="a" style="left:47px;top:651px;" width="6" height="9" viewBox="0 0 6 9"><path d="M0 0 L5 4.5 L0 9 Z" fill="#000"/></svg>
<svg class="a" style="left:122px;top:651px;" width="7" height="8" viewBox="0 0 7 8"><rect x="0" y="0" width="2" height="8" fill="#000"/><rect x="4" y="0" width="2" height="8" fill="#000"/></svg>
<div class="a" style="left:200px;top:651px;width:7px;height:7px;background:#000"></div>
<svg class="a" style="left:275px;top:652px;" width="11" height="6" viewBox="0 0 11 6"><path d="M0 0 H10 L5 5 Z" fill="#000"/></svg>
<div class="a" style="left:324px;top:639px;width:62px;height:29px;border:1px solid #000;box-shadow:inset 0 0 0 0.4px #000;box-sizing:border-box;background:#f0f0f0"></div>
<svg class="a" style="left:325px;top:640px;" width="60" height="27" viewBox="0 0 60 27"><rect x="0" y="0" width="60" height="1" fill="#fff"/><rect x="0" y="0" width="1" height="27" fill="#fff"/><rect x="57.5" y="1" width="1.5" height="26" fill="#a8a8a8"/><rect x="1" y="24" width="58" height="2" fill="#a8a8a8"/><path d="M1 25 L5 21.5 L10 21.5 L15 22.5 L27 23 L27 25 Z" fill="#a8a8a8"/></svg>
<div class="a" style="left:331.5px;top:646.5px;width:6.5px;height:12px;background:#008000"></div>
<div class="a" style="left:389px;top:643px;width:298px;height:22px;background:#fff;border-top:1px solid #a0a0a0;border-left:1px solid #a0a0a0;border-right:1px solid #fff;border-bottom:1px solid #fff;box-sizing:border-box;box-shadow:inset 1px 1px 0 #d0d0d0"></div>
<div class="a" style="left:391px;top:645px;width:276px;height:19px;overflow:hidden"><div class="a t" style="left:0;top:0;font-size:16px;line-height:19px;white-space:nowrap;letter-spacing:-0.22px">C:\Users\Fernando.Manuel\Desktop\Diagnostics</div></div>
<div class="a" style="left:668px;top:644px;width:18px;height:20px;background:#f0f0f0;border-top:1px solid #fff;border-left:1px solid #fff;border-right:2px solid #000;border-bottom:2px solid #000;box-sizing:border-box"></div>
<svg class="a" style="left:669px;top:645px;" width="16" height="18" viewBox="0 0 16 18"><path d="M1.5 5.5 L3 4.5 H5.5 L6.5 5.5 H10 V7.5 L1.5 14.5 Z" fill="#ffff40" stroke="#000" stroke-width="1.1" stroke-linejoin="round"/><path d="M1.5 14.5 L5.5 9.5 H14.5 L10.5 14.5 Z" fill="#808000" stroke="#000" stroke-width="1.1" stroke-linejoin="round"/><path d="M7 3 Q9.5 0.5 12.5 2.5" fill="none" stroke="#000" stroke-width="1"/><path d="M11 3.5 L13.8 1.6 L13.8 5 Z" fill="#000"/></svg>
<div class="a" style="left:700px;top:38px;width:631px;height:650px;background:linear-gradient(#b9c8d9, #cfdcea 22px, #d6e3f1 29px, #d7e4f2);border:1px solid #646464;border-top-right-radius:6px;border-top-left-radius:0px;box-sizing:border-box"></div>
<svg class="a" style="left:706px;top:49px;" width="16" height="16" viewBox="0 0 16 16"><circle cx="8" cy="8" r="5.75" fill="none" stroke="#5e7e26" stroke-width="4.5" stroke-dasharray="27.1 9"/>
<circle cx="8" cy="8" r="3.5" fill="#fff"/>
<rect x="7" y="7.3" width="2" height="2" fill="#1c1c78"/>
<path d="M10 0.5 V6 H15.5 Z" fill="#24248a"/><path d="M12 4 L16 0" stroke="#24248a" stroke-width="2"/></svg>
<div class="a t" style="left:726.5px;top:50.5px;line-height:14px;font-size:12px;color:#a0a4ac;-webkit-text-stroke:0;letter-spacing:-0.467px;">Dashboard</div>
<div class="a" style="left:1221px;top:48px;width:32px;height:18px;border:1px solid #8797b0;border-radius:3px;box-sizing:border-box;background:linear-gradient(#c3d0df,#d3dee9)"></div>
<div class="a" style="left:1231px;top:56px;width:11px;height:5px;background:#f4f4f4;border:1px solid #505050;border-radius:1.5px"></div>
<div class="a" style="left:1255px;top:48px;width:32px;height:18px;border:1px solid #8797b0;border-radius:3px;box-sizing:border-box;background:linear-gradient(#c3d0df,#d3dee9)"></div>
<svg class="a" style="left:1265px;top:52px;" width="11" height="9" viewBox="0 0 11 9"><rect x="0.75" y="0.75" width="9.5" height="7.5" rx="1" fill="#f4f4f4" stroke="#505050" stroke-width="1.5"/><rect x="3.5" y="3.5" width="4" height="2" fill="#505050"/></svg>
<div class="a" style="left:1289px;top:48px;width:32px;height:18px;border:1px solid #8797b0;border-radius:3px;box-sizing:border-box;background:linear-gradient(#c3d0df,#d3dee9)"></div>
<svg class="a" style="left:1299px;top:52px;" width="11" height="9" viewBox="0 0 11 9"><path d="M1.8 1.3 L9.2 7.7 M9.2 1.3 L1.8 7.7" stroke="#505050" stroke-width="3.8" stroke-linecap="round"/><path d="M1.8 1.3 L9.2 7.7 M9.2 1.3 L1.8 7.7" stroke="#f2f2f2" stroke-width="1.6" stroke-linecap="round"/></svg>
<div class="a" style="left:704px;top:69px;width:619px;height:611px;background:#f0f0f0;border-bottom:1px solid #a0a0a0;border-right:1px solid #a0a0a0;box-sizing:border-box"></div>
<div class="a" style="left:704px;top:69px;width:46px;height:611px;border-right:1px solid #a0a0a0;border-bottom:1px solid #a0a0a0;box-sizing:border-box"></div>
<div class="a" style="left:709px;top:74px;width:34px;height:63px;border:1px solid #000;box-sizing:border-box;background:#a0a0a0"></div>
<svg class="a" style="left:710px;top:75px;" width="32" height="61" viewBox="0 0 32 61"><path d="M0 0 H32 V61 H0 Z" fill="#b0b0b0"/><path d="M0 0 H29 L27 42 L20 50 H8 L3 42 Z" fill="#f0f0f0"/><path d="M4 32 H27 L26 50 H8 Z" fill="#d8d8d8"/><path d="M0 0 V61 L8 50 L3 42 L2 0 Z" fill="#fff"/><path d="M0 61 L8 50 H26 L32 61 Z" fill="#a8a8a8"/><path d="M29 0 H32 V61 L26 50 Z" fill="#909090"/></svg>
<div class="a" style="left:715px;top:80px;width:20px;height:7px;background:#00ff00"></div>
<div class="a" style="left:709px;top:145px;width:26px;height:16px;background:#000"></div>
<div class="a t" style="left:709.05px;top:145px;width:26px;height:16px;line-height:16px;font-size:14px;font-weight:bold;color:#00ff00;text-align:center;letter-spacing:0.1px;">20</div>
<div class="a" style="left:724px;top:167px;width:3px;height:208px;background:#008000"></div>
<div class="a" style="left:708px;top:167px;width:10px;height:2px;background:#000"></div>
<div class="a" style="left:732px;top:167px;width:11px;height:2px;background:#000"></div>
<div class="a" style="left:714px;top:176px;width:5px;height:1px;background:#000"></div>
<div class="a" style="left:732px;top:176px;width:5px;height:1px;background:#000"></div>
<div class="a" style="left:714px;top:185px;width:5px;height:1px;background:#000"></div>
<div class="a" style="left:732px;top:185px;width:5px;height:1px;background:#000"></div>
<div class="a" style="left:714px;top:193px;width:5px;height:1px;background:#000"></div>
<div class="a" style="left:732px;top:193px;width:5px;height:1px;background:#000"></div>
<div class="a" style="left:714px;top:201px;width:5px;height:1px;background:#000"></div>
<div class="a" style="left:732px;top:201px;width:5px;height:1px;background:#000"></div>
<div class="a" style="left:708px;top:208px;width:10px;height:2px;background:#000"></div>
<div class="a" style="left:732px;top:208px;width:11px;height:2px;background:#000"></div>
<div class="a" style="left:714px;top:218px;width:5px;height:1px;background:#000"></div>
<div class="a" style="left:732px;top:218px;width:5px;height:1px;background:#000"></div>
<div class="a" style="left:714px;top:226px;width:5px;height:1px;background:#000"></div>
<div class="a" style="left:732px;top:226px;width:5px;height:1px;background:#000"></div>
<div class="a" style="left:714px;top:234px;width:5px;height:1px;background:#000"></div>
<div class="a" style="left:732px;top:234px;width:5px;height:1px;background:#000"></div>
<div class="a" style="left:714px;top:243px;width:5px;height:1px;background:#000"></div>
<div class="a" style="left:732px;top:243px;width:5px;height:1px;background:#000"></div>
<div class="a" style="left:708px;top:250px;width:10px;height:2px;background:#000"></div>
<div class="a" style="left:732px;top:250px;width:11px;height:2px;background:#000"></div>
<div class="a" style="left:714px;top:259px;width:5px;height:1px;background:#000"></div>
<div class="a" style="left:732px;top:259px;width:5px;height:1px;background:#000"></div>
<div class="a" style="left:714px;top:267px;width:5px;height:1px;background:#000"></div>
<div class="a" style="left:732px;top:267px;width:5px;height:1px;background:#000"></div>
<div class="a" style="left:714px;top:276px;width:5px;height:1px;background:#000"></div>
<div class="a" style="left:732px;top:276px;width:5px;height:1px;background:#000"></div>
<div class="a" style="left:714px;top:284px;width:5px;height:1px;background:#000"></div>
<div class="a" style="left:732px;top:284px;width:5px;height:1px;background:#000"></div>
<div class="a" style="left:708px;top:291px;width:10px;height:2px;background:#000"></div>
<div class="a" style="left:732px;top:291px;width:11px;height:2px;background:#000"></div>
<div class="a" style="left:714px;top:300px;width:5px;height:1px;background:#000"></div>
<div class="a" style="left:732px;top:300px;width:5px;height:1px;background:#000"></div>
<div class="a" style="left:714px;top:309px;width:5px;height:1px;background:#000"></div>
<div class="a" style="left:732px;top:309px;width:5px;height:1px;background:#000"></div>
<div class="a" style="left:714px;top:317px;width:5px;height:1px;background:#000"></div>
<div class="a" style="left:732px;top:317px;width:5px;height:1px;background:#000"></div>
<div class="a" style="left:714px;top:325px;width:5px;height:1px;background:#000"></div>
<div class="a" style="left:732px;top:325px;width:5px;height:1px;background:#000"></div>
<div class="a" style="left:708px;top:333px;width:10px;height:2px;background:#000"></div>
<div class="a" style="left:732px;top:333px;width:11px;height:2px;background:#000"></div>
<div class="a" style="left:714px;top:342px;width:5px;height:1px;background:#000"></div>
<div class="a" style="left:732px;top:342px;width:5px;height:1px;background:#000"></div>
<div class="a" style="left:714px;top:350px;width:5px;height:1px;background:#000"></div>
<div class="a" style="left:732px;top:350px;width:5px;height:1px;background:#000"></div>
<div class="a" style="left:714px;top:358px;width:5px;height:1px;background:#000"></div>
<div class="a" style="left:732px;top:358px;width:5px;height:1px;background:#000"></div>
<div class="a" style="left:714px;top:367px;width:5px;height:1px;background:#000"></div>
<div class="a" style="left:732px;top:367px;width:5px;height:1px;background:#000"></div>
<div class="a" style="left:708px;top:374px;width:10px;height:2px;background:#000"></div>
<div class="a" style="left:732px;top:374px;width:11px;height:2px;background:#000"></div>
<div class="a" style="left:710px;top:289px;width:31px;height:13px;background:#fff;border:1px solid #000;border-top-color:#a0a0a0;border-left-color:#a0a0a0;box-sizing:border-box"></div>
<div class="a" style="left:713px;top:292px;width:25px;height:7px;background:#008000;border:1px solid #000;box-sizing:border-box"></div>
<div class="a" style="left:705px;top:390px;width:13px;height:13px;background:#fff;border-top:1px solid #a0a0a0;border-left:1px solid #a0a0a0;border-right:1px solid #fff;border-bottom:1px solid #fff;box-sizing:border-box;box-shadow:inset 1px 1px 0 #696969"></div>
<div class="a t" style="left:723px;top:390.0px;line-height:12px;font-size:11px;">Wait</div>
<div class="a" style="left:707px;top:648px;width:41px;height:25px;background:#f0f0f0;border-top:1px solid #fff;border-left:1px solid #fff;border-right:1px solid #696969;border-bottom:1px solid #696969;box-sizing:border-box;box-shadow:inset -1px -1px 0 #a0a0a0"></div>
<div class="a t" style="left:707.0px;top:654.0px;line-height:12px;font-size:11px;width:40px;text-align:center;">One</div>
<div class="a" style="left:751px;top:70px;width:21px;height:53px;border-left:1px solid #fff;border-bottom:2px solid #707070;box-sizing:border-box;border-bottom-left-radius:2px"></div>
<div class="a t" style="left:721.5px;top:89.9px;width:80px;line-height:13px;font-size:11px;text-align:center;transform:rotate(-90deg)">General</div>
<div class="a" style="left:752px;top:123px;width:20px;height:40px;border-left:1px solid #fff;border-bottom:2px solid #707070;box-sizing:border-box;border-bottom-left-radius:2px"></div>
<div class="a t" style="left:721.5px;top:134.8px;width:80px;line-height:13px;font-size:11px;text-align:center;transform:rotate(-90deg)">More</div>
<div class="a" style="left:752px;top:164px;width:20px;height:58px;border-left:1px solid #fff;border-bottom:2px solid #707070;box-sizing:border-box;border-bottom-left-radius:2px"></div>
<div class="a t" style="left:721.5px;top:187.8px;width:80px;line-height:13px;font-size:11px;text-align:center;transform:rotate(-90deg)">MHub837</div>
<div class="a" style="left:771px;top:69px;width:552px;height:611px;border-left:1px solid #fff;box-sizing:border-box"></div>
<div class="a" style="left:776px;top:77px;width:190px;height:599px;border:2px solid #000;border-bottom:none;box-sizing:border-box;background:#f0f0f0"></div>
<div class="a" style="left:778px;top:79px;width:186px;height:18px;background:#99b4d1"></div>
<div class="a t" style="left:778.0px;top:82.0px;line-height:12px;font-size:11px;width:186px;text-align:center;font-weight:bold;">GPS Information</div>
<div class="a" style="left:784px;top:109px;width:176px;height:81px;background:#000"></div>
<div class="a" style="left:785px;top:110px;width:100px;height:38px;border:1px solid #000;box-sizing:border-box;background:#f0f0f0;box-shadow:inset 1px 1px 0 #fff, inset -2px -2px 0 #a0a0a0;"></div>
<div class="a" style="left:887px;top:110px;width:72px;height:38px;border:1px solid #000;box-sizing:border-box;background:#f0f0f0;box-shadow:inset 1px 1px 0 #fff, inset -2px -2px 0 #a0a0a0;"></div>
<div class="a" style="left:785px;top:149px;width:100px;height:40px;border:1px solid #000;box-sizing:border-box;background:#f0f0f0;box-shadow:inset 1px 1px 0 #fff, inset -2px -2px 0 #a0a0a0;"></div>
<div class="a" style="left:887px;top:149px;width:72px;height:40px;border:1px solid #000;box-sizing:border-box;background:#f0f0f0;box-shadow:inset 1px 1px 0 #fff, inset -2px -2px 0 #a0a0a0;"></div>
<div class="a" style="left:790px;top:114px;width:86px;height:16px;background:#000"></div>
<div class="a t" style="left:790px;top:114px;width:80.6px;height:16px;line-height:16px;font-size:14px;font-weight:bold;color:#00ff00;text-align:right;letter-spacing:0.1px;">-26.134136</div>
<div class="a" style="left:892px;top:114px;width:58px;height:16px;background:#000"></div>
<div class="a t" style="left:892px;top:114px;width:52.6px;height:16px;line-height:16px;font-size:14px;font-weight:bold;color:#00ff00;text-align:right;letter-spacing:0.1px;">01238</div>
<div class="a" style="left:790px;top:154px;width:86px;height:16px;background:#000"></div>
<div class="a t" style="left:790px;top:154px;width:80.6px;height:16px;line-height:16px;font-size:14px;font-weight:bold;color:#00ff00;text-align:right;letter-spacing:0.1px;">28.075609</div>
<div class="a" style="left:892px;top:154px;width:58px;height:16px;background:#000"></div>
<div class="a t" style="left:892px;top:154px;width:52.6px;height:16px;line-height:16px;font-size:14px;font-weight:bold;color:#00ff00;text-align:right;letter-spacing:0.1px;">00129</div>
<div class="a t" style="left:785.0px;top:131.8px;line-height:12.5px;font-size:11.5px;width:100px;text-align:center;">Latitude</div>
<div class="a t" style="left:887.0px;top:131.8px;line-height:12.5px;font-size:11.5px;width:72px;text-align:center;">Altitude</div>
<div class="a t" style="left:785.0px;top:171.8px;line-height:12.5px;font-size:11.5px;width:100px;text-align:center;">Longitude</div>
<div class="a t" style="left:883.0px;top:171.8px;line-height:12.5px;font-size:11.5px;width:80px;text-align:center;">Position Age</div>
<div class="a" style="left:785px;top:191px;width:174px;height:28px;background:#f0f0f0;border-top:1px solid #fff;border-left:1px solid #fff;border-right:1px solid #a0a0a0;border-bottom:1px solid #a0a0a0;box-sizing:border-box"></div>
<div class="a" style="left:787px;top:193px;width:169px;height:23px;background:#000"></div>
<div class="a t" style="left:786.5px;top:198.0px;line-height:14px;font-size:13px;width:169px;text-align:center;font-weight:bold;color:#fff;">0 Satellite(s)</div>
<div class="a" style="left:785px;top:221px;width:172px;height:55px;overflow:hidden;background:linear-gradient(90deg,#c2dcc2 0%,#e8f1e8 35%,#ffffff 50%,#e8f1e8 65%,#c2dcc2 100%)">
<svg class="a" style="left:0;top:0" width="172" height="55"><rect x="-5" y="0" width="1" height="8" fill="#000"/><rect x="0" y="0" width="1" height="15" fill="#000"/><rect x="6" y="0" width="1" height="8" fill="#000"/><rect x="12" y="0" width="1" height="8" fill="#000"/><rect x="18" y="0" width="1" height="8" fill="#000"/><rect x="23" y="0" width="1" height="8" fill="#000"/><rect x="29" y="0" width="1" height="15" fill="#000"/><rect x="35" y="0" width="1" height="8" fill="#000"/><rect x="40" y="0" width="1" height="8" fill="#000"/><rect x="46" y="0" width="1" height="8" fill="#000"/><rect x="52" y="0" width="1" height="8" fill="#000"/><rect x="58" y="0" width="1" height="15" fill="#000"/><rect x="63" y="0" width="1" height="8" fill="#000"/><rect x="69" y="0" width="1" height="8" fill="#000"/><rect x="75" y="0" width="1" height="8" fill="#000"/><rect x="80" y="0" width="1" height="8" fill="#000"/><rect x="86" y="0" width="1" height="15" fill="#000"/><rect x="92" y="0" width="1" height="8" fill="#000"/><rect x="97" y="0" width="1" height="8" fill="#000"/><rect x="103" y="0" width="1" height="8" fill="#000"/><rect x="109" y="0" width="1" height="8" fill="#000"/><rect x="114" y="0" width="1" height="15" fill="#000"/><rect x="120" y="0" width="1" height="8" fill="#000"/><rect x="126" y="0" width="1" height="8" fill="#000"/><rect x="132" y="0" width="1" height="8" fill="#000"/><rect x="137" y="0" width="1" height="8" fill="#000"/><rect x="143" y="0" width="1" height="15" fill="#000"/><rect x="149" y="0" width="1" height="8" fill="#000"/><rect x="154" y="0" width="1" height="8" fill="#000"/><rect x="160" y="0" width="1" height="8" fill="#000"/><rect x="166" y="0" width="1" height="8" fill="#000"/><rect x="172" y="0" width="1" height="15" fill="#000"/><rect x="177" y="0" width="1" height="8" fill="#000"/><rect x="86" y="0" width="1" height="55" fill="#ff0000"/></svg>
<div class="a t" style="left:-19.0px;top:15.5px;width:40px;text-align:center;font-size:12.5px;font-weight:bold;line-height:14px">-30</div>
<div class="a t" style="left:9.5px;top:15.5px;width:40px;text-align:center;font-size:12.5px;font-weight:bold;line-height:14px">-20</div>
<div class="a t" style="left:38.0px;top:15.5px;width:40px;text-align:center;font-size:12.5px;font-weight:bold;line-height:14px">-10</div>
<div class="a t" style="left:66.5px;top:15.5px;width:40px;text-align:center;font-size:12.5px;font-weight:bold;line-height:14px">0</div>
<div class="a t" style="left:95.0px;top:15.5px;width:40px;text-align:center;font-size:12.5px;font-weight:bold;line-height:14px">10</div>
<div class="a t" style="left:123.5px;top:15.5px;width:40px;text-align:center;font-size:12.5px;font-weight:bold;line-height:14px">20</div>
<div class="a t" style="left:152.0px;top:15.5px;width:40px;text-align:center;font-size:12.5px;font-weight:bold;line-height:14px">30</div>
<div class="a t" style="left:0;top:39px;width:172px;text-align:center;font-size:13.5px;font-weight:bold;line-height:15px">Heading</div>
<svg class="a" style="left:0;top:0" width="172" height="55"><rect x="86" y="15" width="1" height="40" fill="#ff0000"/></svg>
</div>
<div class="a" style="left:784px;top:282px;width:175px;height:174px;border:2px solid #000;box-sizing:border-box"></div>
<div class="a" style="left:808px;top:292.5px;width:13px;height:13px;border:1px solid #a0a0a0;box-sizing:border-box;background:#f0f0f0"></div>
<div class="a t" style="left:826px;top:293.0px;line-height:12px;font-size:11px;">Valid Position</div>
<svg class="a" style="left:808px;top:311px;" width="13" height="14" viewBox="0 0 13 14"><path d="M6.5 0.5 L12.5 13.5 L0.5 13.5 Z" fill="none" stroke="#a0a0a0" stroke-width="1"/></svg>
<div class="a t" style="left:826px;top:312.0px;line-height:12px;font-size:11px;">Antenna Connected</div>
<svg class="a" style="left:808px;top:330px;" width="13" height="14" viewBox="0 0 13 14"><path d="M0.5 0.5 L12.5 0.5 L6.5 13.5 Z" fill="none" stroke="#a0a0a0" stroke-width="1"/></svg>
<div class="a t" style="left:826px;top:331.0px;line-height:12px;font-size:11px;">Antenna Shorted</div>
<svg class="a" style="left:808px;top:350px;" width="13" height="14" viewBox="0 0 13 14"><path d="M6.5 0.5 L12.5 13.5 L0.5 13.5 Z" fill="none" stroke="#a0a0a0" stroke-width="1"/></svg>
<div class="a t" style="left:826px;top:351.0px;line-height:12px;font-size:11px;">Antenna Power</div>
<div class="a" style="left:808px;top:369.5px;width:13px;height:13px;border:1px solid #a0a0a0;box-sizing:border-box;background:#f0f0f0"></div>
<div class="a t" style="left:826px;top:370.0px;line-height:12px;font-size:11px;">2D Lock Obtained</div>
<div class="a" style="left:808px;top:388.5px;width:13px;height:13px;border:1px solid #a0a0a0;box-sizing:border-box;background:#f0f0f0"></div>
<div class="a t" style="left:826px;top:389.0px;line-height:12px;font-size:11px;">3D Lock Obtained</div>
<div class="a" style="left:808px;top:408.5px;width:13px;height:13px;border:1px solid #a0a0a0;box-sizing:border-box;background:#f0f0f0"></div>
<div class="a t" style="left:826px;top:409.0px;line-height:12px;font-size:11px;">UTC Time Valid</div>
<div class="a" style="left:808px;top:429.5px;width:13px;height:13px;background:#00ff00;border:1px solid #a0a0a0;box-sizing:border-box"></div>
<div class="a t" style="left:826px;top:430.0px;line-height:12px;font-size:11px;">Best Guess Position</div>
<div class="a" style="left:969px;top:77px;width:275px;height:257px;border-top:1px solid #a0a0a0;border-left:1px solid #a0a0a0;border-right:1px solid #fff;border-bottom:1px solid #fff;box-sizing:border-box"></div>
<div class="a" style="left:970px;top:78px;width:273px;height:255px;border-right:1px solid #a0a0a0;border-bottom:1px solid #a0a0a0;box-sizing:border-box"></div>
<div class="a" style="left:971px;top:315px;width:271px;height:1px;background:#fff"></div>
<div class="a" style="left:971px;top:316px;width:271px;height:1px;background:#d8d8d8"></div>
<div class="a" style="left:970px;top:78px;width:273px;height:237px;overflow:hidden"><svg width="273" height="237"><path d="M64.29 203.71 A100 100 0 0 1 131.23 33.07 L132.02 54.06 A79 79 0 0 0 79.14 188.86 Z" fill="#008000"/><path d="M131.23 33.07 A100 100 0 0 1 205.71 203.71 L190.86 188.86 A79 79 0 0 0 132.02 54.06 Z" fill="#ff0000"/><path d="M64.29 203.71 A100 100 0 1 1 205.71 203.71" fill="none" stroke="#000" stroke-width="1"/><line x1="64.29" y1="203.71" x2="53.68" y2="214.32" stroke="#000" stroke-width="1"/><line x1="57.95" y1="196.74" x2="53.33" y2="200.57" stroke="#000" stroke-width="1"/><line x1="52.29" y1="189.21" x2="47.33" y2="192.58" stroke="#000" stroke-width="1"/><line x1="47.37" y1="181.18" x2="42.11" y2="184.07" stroke="#000" stroke-width="1"/><line x1="43.22" y1="172.71" x2="37.72" y2="175.10" stroke="#000" stroke-width="1"/><line x1="39.89" y1="163.90" x2="25.63" y2="168.54" stroke="#000" stroke-width="1"/><line x1="37.41" y1="154.81" x2="31.55" y2="156.12" stroke="#000" stroke-width="1"/><line x1="35.79" y1="145.53" x2="29.84" y2="146.29" stroke="#000" stroke-width="1"/><line x1="35.05" y1="136.14" x2="29.05" y2="136.33" stroke="#000" stroke-width="1"/><line x1="35.20" y1="126.72" x2="29.21" y2="126.34" stroke="#000" stroke-width="1"/><line x1="36.23" y1="117.36" x2="21.42" y2="115.01" stroke="#000" stroke-width="1"/><line x1="38.14" y1="108.13" x2="32.33" y2="106.64" stroke="#000" stroke-width="1"/><line x1="40.91" y1="99.13" x2="35.27" y2="97.09" stroke="#000" stroke-width="1"/><line x1="44.52" y1="90.42" x2="39.09" y2="87.87" stroke="#000" stroke-width="1"/><line x1="48.93" y1="82.10" x2="43.76" y2="79.04" stroke="#000" stroke-width="1"/><line x1="54.10" y1="74.22" x2="41.96" y2="65.40" stroke="#000" stroke-width="1"/><line x1="59.99" y1="66.87" x2="55.49" y2="62.90" stroke="#000" stroke-width="1"/><line x1="66.55" y1="60.10" x2="62.44" y2="55.73" stroke="#000" stroke-width="1"/><line x1="73.71" y1="53.98" x2="70.03" y2="49.24" stroke="#000" stroke-width="1"/><line x1="81.42" y1="48.57" x2="78.20" y2="43.50" stroke="#000" stroke-width="1"/><line x1="89.60" y1="43.90" x2="82.79" y2="30.53" stroke="#000" stroke-width="1"/><line x1="98.19" y1="40.02" x2="95.98" y2="34.44" stroke="#000" stroke-width="1"/><line x1="107.10" y1="36.97" x2="105.43" y2="31.21" stroke="#000" stroke-width="1"/><line x1="116.26" y1="34.77" x2="115.14" y2="28.88" stroke="#000" stroke-width="1"/><line x1="125.59" y1="33.44" x2="125.02" y2="27.47" stroke="#000" stroke-width="1"/><line x1="135.00" y1="33.00" x2="135.00" y2="18.00" stroke="#000" stroke-width="1"/><line x1="144.41" y1="33.44" x2="144.98" y2="27.47" stroke="#000" stroke-width="1"/><line x1="153.74" y1="34.77" x2="154.86" y2="28.88" stroke="#000" stroke-width="1"/><line x1="162.90" y1="36.97" x2="164.57" y2="31.21" stroke="#000" stroke-width="1"/><line x1="171.81" y1="40.02" x2="174.02" y2="34.44" stroke="#000" stroke-width="1"/><line x1="180.40" y1="43.90" x2="187.21" y2="30.53" stroke="#000" stroke-width="1"/><line x1="188.58" y1="48.57" x2="191.80" y2="43.50" stroke="#000" stroke-width="1"/><line x1="196.29" y1="53.98" x2="199.97" y2="49.24" stroke="#000" stroke-width="1"/><line x1="203.45" y1="60.10" x2="207.56" y2="55.73" stroke="#000" stroke-width="1"/><line x1="210.01" y1="66.87" x2="214.51" y2="62.90" stroke="#000" stroke-width="1"/><line x1="215.90" y1="74.22" x2="228.04" y2="65.40" stroke="#000" stroke-width="1"/><line x1="221.07" y1="82.10" x2="226.24" y2="79.04" stroke="#000" stroke-width="1"/><line x1="225.48" y1="90.42" x2="230.91" y2="87.87" stroke="#000" stroke-width="1"/><line x1="229.09" y1="99.13" x2="234.73" y2="97.09" stroke="#000" stroke-width="1"/><line x1="231.86" y1="108.13" x2="237.67" y2="106.64" stroke="#000" stroke-width="1"/><line x1="233.77" y1="117.36" x2="248.58" y2="115.01" stroke="#000" stroke-width="1"/><line x1="234.80" y1="126.72" x2="240.79" y2="126.34" stroke="#000" stroke-width="1"/><line x1="234.95" y1="136.14" x2="240.95" y2="136.33" stroke="#000" stroke-width="1"/><line x1="234.21" y1="145.53" x2="240.16" y2="146.29" stroke="#000" stroke-width="1"/><line x1="232.59" y1="154.81" x2="238.45" y2="156.12" stroke="#000" stroke-width="1"/><line x1="230.11" y1="163.90" x2="244.37" y2="168.54" stroke="#000" stroke-width="1"/><line x1="226.78" y1="172.71" x2="232.28" y2="175.10" stroke="#000" stroke-width="1"/><line x1="222.63" y1="181.18" x2="227.89" y2="184.07" stroke="#000" stroke-width="1"/><line x1="217.71" y1="189.21" x2="222.67" y2="192.58" stroke="#000" stroke-width="1"/><line x1="212.05" y1="196.74" x2="216.67" y2="200.57" stroke="#000" stroke-width="1"/><line x1="205.71" y1="203.71" x2="216.32" y2="214.32" stroke="#000" stroke-width="1"/><text x="47.32" y="224.68" text-anchor="middle" font-family="Liberation Sans" font-size="12.5">0</text><text x="17.07" y="175.32" text-anchor="middle" font-family="Liberation Sans" font-size="12.5">25</text><text x="12.53" y="117.60" text-anchor="middle" font-family="Liberation Sans" font-size="12.5">50</text><text x="34.68" y="64.11" text-anchor="middle" font-family="Liberation Sans" font-size="12.5">75</text><text x="78.71" y="26.52" text-anchor="middle" font-family="Liberation Sans" font-size="12.5">100</text><text x="135.00" y="13.00" text-anchor="middle" font-family="Liberation Sans" font-size="12.5">125</text><text x="191.29" y="26.52" text-anchor="middle" font-family="Liberation Sans" font-size="12.5">150</text><text x="235.32" y="64.11" text-anchor="middle" font-family="Liberation Sans" font-size="12.5">175</text><text x="257.47" y="117.60" text-anchor="middle" font-family="Liberation Sans" font-size="12.5">200</text><text x="252.93" y="175.32" text-anchor="middle" font-family="Liberation Sans" font-size="12.5">225</text><text x="222.68" y="224.68" text-anchor="middle" font-family="Liberation Sans" font-size="12.5">250</text><path d="M69.95 198.05 L53.68 214.32 L59.99 220.17 Z" fill="#008000" stroke="#000" stroke-width="0.8"/><path d="M50.36 160.50 L27.88 172.01 L25.41 164.40 Z" fill="#008000" stroke="#000" stroke-width="0.8"/><line x1="150.45" y1="117.55" x2="53.68" y2="214.32" stroke="#ffff00" stroke-width="2"/></svg></div>
<svg class="a" style="left:1096px;top:202px;" width="18" height="18" viewBox="0 0 18 18"><polygon points="5.5,1 12.5,1 17,5.5 17,12.5 12.5,17 5.5,17 1,12.5 1,5.5" fill="#008000"/><path d="M9 5 L13 9 L9 13 L5 9 Z" fill="#0000ff" stroke="#000" stroke-width="0.8"/></svg>
<div class="a t" style="left:1065.0px;top:282.0px;line-height:14px;font-size:13px;width:80px;text-align:center;font-weight:bold;">Km/h</div>
<div class="a t" style="left:1055.0px;top:317.0px;line-height:14px;font-size:13px;width:100px;text-align:center;font-weight:bold;">Speed</div>
<div class="a" style="left:1249px;top:77px;width:80px;height:235px;border-top:1px solid #a0a0a0;border-left:1px solid #a0a0a0;box-sizing:border-box"></div>
<div class="a" style="left:1250px;top:293px;width:73px;height:1px;background:#fff"></div>
<div class="a" style="left:1250px;top:294px;width:73px;height:1px;background:#d8d8d8"></div>
<div class="a" style="left:1250px;top:78px;width:70px;height:215px;overflow:hidden"><svg width="70" height="215"><path d="M58.48 179.52 A87 87 0 1 1 181.52 179.52 L168.79 166.79 A69 69 0 1 0 71.21 166.79 Z" fill="#008000"/><path d="M58.48 179.52 A87 87 0 1 1 181.52 179.52" fill="none" stroke="#000" stroke-width="1"/><line x1="58.48" y1="179.52" x2="50.00" y2="188.00" stroke="#000" stroke-width="1"/><line x1="52.97" y1="173.46" x2="49.11" y2="176.64" stroke="#000" stroke-width="1"/><line x1="48.04" y1="166.90" x2="43.91" y2="169.71" stroke="#000" stroke-width="1"/><line x1="43.76" y1="159.91" x2="39.38" y2="162.32" stroke="#000" stroke-width="1"/><line x1="40.16" y1="152.55" x2="35.57" y2="154.54" stroke="#000" stroke-width="1"/><line x1="37.26" y1="144.88" x2="25.85" y2="148.59" stroke="#000" stroke-width="1"/><line x1="35.10" y1="136.98" x2="30.22" y2="138.07" stroke="#000" stroke-width="1"/><line x1="33.69" y1="128.90" x2="28.73" y2="129.53" stroke="#000" stroke-width="1"/><line x1="33.04" y1="120.73" x2="28.05" y2="120.89" stroke="#000" stroke-width="1"/><line x1="33.17" y1="112.54" x2="28.18" y2="112.22" stroke="#000" stroke-width="1"/><line x1="34.07" y1="104.39" x2="22.22" y2="102.51" stroke="#000" stroke-width="1"/><line x1="35.73" y1="96.36" x2="30.89" y2="95.12" stroke="#000" stroke-width="1"/><line x1="38.14" y1="88.53" x2="33.44" y2="86.84" stroke="#000" stroke-width="1"/><line x1="41.28" y1="80.96" x2="36.76" y2="78.83" stroke="#000" stroke-width="1"/><line x1="45.12" y1="73.71" x2="40.81" y2="71.17" stroke="#000" stroke-width="1"/><line x1="49.62" y1="66.86" x2="39.91" y2="59.81" stroke="#000" stroke-width="1"/><line x1="54.74" y1="60.47" x2="50.99" y2="57.16" stroke="#000" stroke-width="1"/><line x1="60.44" y1="54.58" x2="57.02" y2="50.93" stroke="#000" stroke-width="1"/><line x1="66.68" y1="49.26" x2="63.61" y2="45.31" stroke="#000" stroke-width="1"/><line x1="73.38" y1="44.54" x2="70.70" y2="40.32" stroke="#000" stroke-width="1"/><line x1="80.50" y1="40.48" x2="75.05" y2="29.79" stroke="#000" stroke-width="1"/><line x1="87.97" y1="37.11" x2="86.13" y2="32.46" stroke="#000" stroke-width="1"/><line x1="95.73" y1="34.45" x2="94.33" y2="29.65" stroke="#000" stroke-width="1"/><line x1="103.70" y1="32.54" x2="102.76" y2="27.63" stroke="#000" stroke-width="1"/><line x1="111.81" y1="31.39" x2="111.34" y2="26.41" stroke="#000" stroke-width="1"/><line x1="120.00" y1="31.00" x2="120.00" y2="19.00" stroke="#000" stroke-width="1"/><line x1="128.19" y1="31.39" x2="128.66" y2="26.41" stroke="#000" stroke-width="1"/><line x1="136.30" y1="32.54" x2="137.24" y2="27.63" stroke="#000" stroke-width="1"/><line x1="144.27" y1="34.45" x2="145.67" y2="29.65" stroke="#000" stroke-width="1"/><line x1="152.03" y1="37.11" x2="153.87" y2="32.46" stroke="#000" stroke-width="1"/><line x1="159.50" y1="40.48" x2="164.95" y2="29.79" stroke="#000" stroke-width="1"/><line x1="166.62" y1="44.54" x2="169.30" y2="40.32" stroke="#000" stroke-width="1"/><line x1="173.32" y1="49.26" x2="176.39" y2="45.31" stroke="#000" stroke-width="1"/><line x1="179.56" y1="54.58" x2="182.98" y2="50.93" stroke="#000" stroke-width="1"/><line x1="185.26" y1="60.47" x2="189.01" y2="57.16" stroke="#000" stroke-width="1"/><line x1="190.38" y1="66.86" x2="200.09" y2="59.81" stroke="#000" stroke-width="1"/><line x1="194.88" y1="73.71" x2="199.19" y2="71.17" stroke="#000" stroke-width="1"/><line x1="198.72" y1="80.96" x2="203.24" y2="78.83" stroke="#000" stroke-width="1"/><line x1="201.86" y1="88.53" x2="206.56" y2="86.84" stroke="#000" stroke-width="1"/><line x1="204.27" y1="96.36" x2="209.11" y2="95.12" stroke="#000" stroke-width="1"/><line x1="205.93" y1="104.39" x2="217.78" y2="102.51" stroke="#000" stroke-width="1"/><line x1="206.83" y1="112.54" x2="211.82" y2="112.22" stroke="#000" stroke-width="1"/><line x1="206.96" y1="120.73" x2="211.95" y2="120.89" stroke="#000" stroke-width="1"/><line x1="206.31" y1="128.90" x2="211.27" y2="129.53" stroke="#000" stroke-width="1"/><line x1="204.90" y1="136.98" x2="209.78" y2="138.07" stroke="#000" stroke-width="1"/><line x1="202.74" y1="144.88" x2="214.15" y2="148.59" stroke="#000" stroke-width="1"/><line x1="199.84" y1="152.55" x2="204.43" y2="154.54" stroke="#000" stroke-width="1"/><line x1="196.24" y1="159.91" x2="200.62" y2="162.32" stroke="#000" stroke-width="1"/><line x1="191.96" y1="166.90" x2="196.09" y2="169.71" stroke="#000" stroke-width="1"/><line x1="187.03" y1="173.46" x2="190.89" y2="176.64" stroke="#000" stroke-width="1"/><line x1="181.52" y1="179.52" x2="190.00" y2="188.00" stroke="#000" stroke-width="1"/><text x="42.22" y="199.78" text-anchor="middle" font-family="Liberation Sans" font-size="12">0</text><text x="15.38" y="155.99" text-anchor="middle" font-family="Liberation Sans" font-size="12">10</text><text x="11.35" y="104.79" text-anchor="middle" font-family="Liberation Sans" font-size="12">20</text><text x="31.01" y="57.34" text-anchor="middle" font-family="Liberation Sans" font-size="12">30</text><text x="70.06" y="23.99" text-anchor="middle" font-family="Liberation Sans" font-size="12">40</text><text x="120.00" y="12.00" text-anchor="middle" font-family="Liberation Sans" font-size="12">50</text><text x="169.94" y="23.99" text-anchor="middle" font-family="Liberation Sans" font-size="12">60</text><text x="208.99" y="57.34" text-anchor="middle" font-family="Liberation Sans" font-size="12">70</text><text x="228.65" y="104.79" text-anchor="middle" font-family="Liberation Sans" font-size="12">80</text><text x="224.62" y="155.99" text-anchor="middle" font-family="Liberation Sans" font-size="12">90</text><text x="197.78" y="199.78" text-anchor="middle" font-family="Liberation Sans" font-size="12">100</text><path d="M63.43 174.57 L46.46 191.54 L53.86 198.26 Z" fill="#008000" stroke="#000" stroke-width="0.8"/><line x1="133.44" y1="104.56" x2="49.29" y2="188.71" stroke="#ffff00" stroke-width="2"/></svg></div>
<div class="a" style="left:966px;top:336px;width:346px;height:2px;background:#000"></div>
<div class="a" style="left:1090px;top:336px;width:2px;height:102px;background:#000"></div>
<div class="a" style="left:1174px;top:336px;width:2px;height:212px;background:#000"></div>
<div class="a" style="left:966px;top:436px;width:210px;height:2px;background:#000"></div>
<div class="a" style="left:966px;top:546px;width:346px;height:2px;background:#000"></div>
<div class="a" style="left:1310px;top:314px;width:2px;height:234px;background:#000"></div>
<div class="a" style="left:1310px;top:314px;width:13px;height:2px;background:#000"></div>
<div class="a" style="left:1176px;top:506px;width:136px;height:2px;background:#000"></div>
<svg class="a" style="left:1000px;top:345px;" width="13" height="13" viewBox="0 0 13 13"><path d="M0.5 0.5 L12.5 6.5 L0.5 12.5 Z" fill="none" stroke="#a0a0a0" stroke-width="1"/></svg>
<div class="a t" style="left:1018px;top:346.0px;line-height:12px;font-size:11px;">Ignition</div>
<svg class="a" style="left:974px;top:363.5px;" width="13" height="13" viewBox="0 0 13 13"><path d="M0.5 0.5 L12.5 6.5 L0.5 12.5 Z" fill="none" stroke="#a0a0a0" stroke-width="1"/></svg>
<div class="a t" style="left:992px;top:364.0px;line-height:12px;font-size:11px;">Input 1</div>
<svg class="a" style="left:1030px;top:363.5px;" width="13" height="13" viewBox="0 0 13 13"><path d="M0.5 0.5 L12.5 6.5 L0.5 12.5 Z" fill="none" stroke="#a0a0a0" stroke-width="1"/></svg>
<div class="a t" style="left:1048px;top:364.0px;line-height:12px;font-size:11px;">Input 5</div>
<svg class="a" style="left:974px;top:380.5px;" width="13" height="13" viewBox="0 0 13 13"><path d="M0.5 0.5 L12.5 6.5 L0.5 12.5 Z" fill="none" stroke="#a0a0a0" stroke-width="1"/></svg>
<div class="a t" style="left:992px;top:381.0px;line-height:12px;font-size:11px;">Input 2</div>
<svg class="a" style="left:1030px;top:380.5px;" width="13" height="13" viewBox="0 0 13 13"><path d="M0.5 0.5 L12.5 6.5 L0.5 12.5 Z" fill="none" stroke="#a0a0a0" stroke-width="1"/></svg>
<div class="a t" style="left:1048px;top:381.0px;line-height:12px;font-size:11px;">Input 6</div>
<svg class="a" style="left:974px;top:397.5px;" width="13" height="13" viewBox="0 0 13 13"><path d="M0.5 0.5 L12.5 6.5 L0.5 12.5 Z" fill="none" stroke="#a0a0a0" stroke-width="1"/></svg>
<div class="a t" style="left:992px;top:398.0px;line-height:12px;font-size:11px;">Input 3</div>
<svg class="a" style="left:1030px;top:397.5px;" width="13" height="13" viewBox="0 0 13 13"><path d="M0.5 0.5 L12.5 6.5 L0.5 12.5 Z" fill="none" stroke="#a0a0a0" stroke-width="1"/></svg>
<div class="a t" style="left:1048px;top:398.0px;line-height:12px;font-size:11px;">Input 7</div>
<svg class="a" style="left:974px;top:414.5px;" width="13" height="13" viewBox="0 0 13 13"><path d="M0.5 0.5 L12.5 6.5 L0.5 12.5 Z" fill="none" stroke="#a0a0a0" stroke-width="1"/></svg>
<div class="a t" style="left:992px;top:415.0px;line-height:12px;font-size:11px;">Input 4</div>
<svg class="a" style="left:1030px;top:414.5px;" width="13" height="13" viewBox="0 0 13 13"><path d="M0.5 0.5 L12.5 6.5 L0.5 12.5 Z" fill="none" stroke="#a0a0a0" stroke-width="1"/></svg>
<div class="a t" style="left:1048px;top:415.0px;line-height:12px;font-size:11px;">Input 8</div>
<svg class="a" style="left:1100px;top:347.5px;" width="13" height="13" viewBox="0 0 13 13"><path d="M12.5 0.5 L0.5 6.5 L12.5 12.5 Z" fill="none" stroke="#a0a0a0" stroke-width="1"/></svg>
<div class="a t" style="left:1118px;top:348.0px;line-height:12px;font-size:11px;">Output 1</div>
<svg class="a" style="left:1100px;top:368.5px;" width="13" height="13" viewBox="0 0 13 13"><path d="M12.5 0.5 L0.5 6.5 L12.5 12.5 Z" fill="none" stroke="#a0a0a0" stroke-width="1"/></svg>
<div class="a t" style="left:1118px;top:369.0px;line-height:12px;font-size:11px;">Output 2</div>
<svg class="a" style="left:1100px;top:390.5px;" width="13" height="13" viewBox="0 0 13 13"><path d="M12.5 0.5 L0.5 6.5 L12.5 12.5 Z" fill="none" stroke="#a0a0a0" stroke-width="1"/></svg>
<div class="a t" style="left:1118px;top:391.0px;line-height:12px;font-size:11px;">Output 3</div>
<svg class="a" style="left:1100px;top:412.5px;" width="13" height="13" viewBox="0 0 13 13"><path d="M12.5 0.5 L0.5 6.5 L12.5 12.5 Z" fill="none" stroke="#a0a0a0" stroke-width="1"/></svg>
<div class="a t" style="left:1118px;top:413.0px;line-height:12px;font-size:11px;">Output 4</div>
<div class="a" style="left:972px;top:444px;width:13px;height:13px;border:1px solid #a0a0a0;box-sizing:border-box;background:#f0f0f0"></div>
<div class="a t" style="left:990px;top:444.0px;line-height:12px;font-size:11px;">Driver Validated</div>
<svg class="a" style="left:1070px;top:443.5px;" width="13" height="13" viewBox="0 0 13 13"><path d="M0.5 0.5 L12.5 6.5 L0.5 12.5 Z" fill="none" stroke="#a0a0a0" stroke-width="1"/></svg>
<div class="a t" style="left:1088px;top:444.0px;line-height:12px;font-size:11px;">Trip in Progress</div>
<div class="a" style="left:972px;top:462px;width:191px;height:80px;background:#000"></div>
<div class="a" style="left:973px;top:463px;width:94px;height:39px;border:1px solid #000;box-sizing:border-box;background:#f0f0f0;box-shadow:inset 1px 1px 0 #fff, inset -2px -2px 0 #a0a0a0;"></div>
<div class="a" style="left:1069px;top:463px;width:94px;height:39px;border:1px solid #000;box-sizing:border-box;background:#f0f0f0;box-shadow:inset 1px 1px 0 #fff, inset -2px -2px 0 #a0a0a0;"></div>
<div class="a" style="left:973px;top:503px;width:94px;height:39px;border:1px solid #000;box-sizing:border-box;background:#f0f0f0;box-shadow:inset 1px 1px 0 #fff, inset -2px -2px 0 #a0a0a0;"></div>
<div class="a" style="left:1069px;top:503px;width:94px;height:39px;border:1px solid #000;box-sizing:border-box;background:#f0f0f0;box-shadow:inset 1px 1px 0 #fff, inset -2px -2px 0 #a0a0a0;"></div>
<div class="a" style="left:992px;top:466px;width:51px;height:17px;background:#000"></div>
<div class="a t" style="left:992.05px;top:466px;width:51px;height:17px;line-height:17px;font-size:14px;font-weight:bold;color:#00ff00;text-align:center;letter-spacing:0.1px;">01989</div>
<div class="a" style="left:1096px;top:466px;width:35px;height:17px;background:#000"></div>
<div class="a t" style="left:1096.05px;top:466px;width:35px;height:17px;line-height:17px;font-size:14px;font-weight:bold;color:#00ff00;text-align:center;letter-spacing:0.1px;">161</div>
<div class="a" style="left:980px;top:507px;width:75px;height:16px;background:#000"></div>
<div class="a t" style="left:980px;top:507px;width:69.6px;height:16px;line-height:16px;font-size:14px;font-weight:bold;color:#00ff00;text-align:right;letter-spacing:0.1px;">0082</div>
<div class="a" style="left:1088px;top:507px;width:51px;height:16px;background:#000"></div>
<div class="a t" style="left:1088.05px;top:507px;width:51px;height:16px;line-height:16px;font-size:14px;font-weight:bold;color:#00ff00;text-align:center;letter-spacing:0.1px;">36203</div>
<div class="a t" style="left:973.0px;top:484.8px;line-height:12.5px;font-size:11.5px;width:94px;text-align:center;">Driver ID</div>
<div class="a t" style="left:1069.0px;top:484.8px;line-height:12.5px;font-size:11.5px;width:94px;text-align:center;">Trip ID</div>
<div class="a t" style="left:973.0px;top:524.8px;line-height:12.5px;font-size:11.5px;width:94px;text-align:center;">Trip Distance</div>
<div class="a t" style="left:1069.0px;top:524.8px;line-height:12.5px;font-size:11.5px;width:94px;text-align:center;">Trip Duration</div>
<div class="a" style="left:1184px;top:346px;width:13px;height:13px;border:1px solid #a0a0a0;box-sizing:border-box;background:#f0f0f0"></div>
<div class="a t" style="left:1202px;top:346.0px;line-height:12px;font-size:11px;">Speeding</div>
<div class="a" style="left:1184px;top:363px;width:13px;height:13px;border:1px solid #a0a0a0;box-sizing:border-box;background:#f0f0f0"></div>
<div class="a t" style="left:1202px;top:363.0px;line-height:12px;font-size:11px;">Excess RPM</div>
<div class="a" style="left:1184px;top:380px;width:13px;height:13px;border:1px solid #a0a0a0;box-sizing:border-box;background:#f0f0f0"></div>
<div class="a t" style="left:1202px;top:380.0px;line-height:12px;font-size:11px;">Excess Idle</div>
<div class="a" style="left:1184px;top:397px;width:13px;height:13px;border:1px solid #a0a0a0;box-sizing:border-box;background:#f0f0f0"></div>
<div class="a t" style="left:1202px;top:397.0px;line-height:12px;font-size:11px;">Excess Acceleration</div>
<div class="a" style="left:1184px;top:414px;width:13px;height:13px;border:1px solid #a0a0a0;box-sizing:border-box;background:#f0f0f0"></div>
<div class="a t" style="left:1202px;top:414.0px;line-height:12px;font-size:11px;">Harsh Braking</div>
<div class="a" style="left:1184px;top:431px;width:13px;height:13px;border:1px solid #a0a0a0;box-sizing:border-box;background:#f0f0f0"></div>
<div class="a t" style="left:1202px;top:431.0px;line-height:12px;font-size:11px;">Free Wheeling</div>
<div class="a" style="left:1184px;top:448px;width:13px;height:13px;border:1px solid #a0a0a0;box-sizing:border-box;background:#f0f0f0"></div>
<div class="a t" style="left:1202px;top:448.0px;line-height:12px;font-size:11px;">Geoloc Breached</div>
<div class="a" style="left:1184px;top:466px;width:13px;height:13px;background:#ff0000;border:1px solid #a0a0a0;box-sizing:border-box"></div>
<div class="a t" style="left:1202px;top:466.0px;line-height:12px;font-size:11px;">Immobilized</div>
<div class="a" style="left:1184px;top:484px;width:13px;height:13px;border:1px solid #a0a0a0;box-sizing:border-box;background:#f0f0f0"></div>
<div class="a t" style="left:1202px;top:484.0px;line-height:12px;font-size:11px;">Disabled</div>
<div class="a" style="left:1316px;top:320px;width:7px;height:160px;border-left:1px solid #000;border-top:1px solid #000;box-sizing:border-box"></div>
<div class="a" style="left:1313px;top:485px;width:10px;height:19px;background:#000"></div>
<div class="a" style="left:1316px;top:519px;width:7px;height:20px;border-left:1px solid #a0a0a0;box-sizing:border-box"></div>
<div class="a t" style="left:1183px;top:521.8px;line-height:12.5px;font-size:11.5px;">Odo</div>
<div class="a" style="left:1209px;top:517px;width:89px;height:19px;background:#000;border:2px solid #8c8c8c;box-sizing:border-box;outline:1px solid #f8f8f8"></div>
<div class="a t" style="left:1211px;top:519px;width:85px;height:15px;line-height:15px;font-size:14px;font-weight:bold;color:#00ff00;text-align:center;letter-spacing:0.1px">0000089.90</div>
<div class="a" style="left:964px;top:77px;width:2px;height:599px;background:#000"></div>
<div class="a" style="left:1244px;top:548px;width:2px;height:128px;background:#000"></div>
<div class="a" style="left:966px;top:548px;width:278px;height:128px;overflow:hidden">
<div class="a" style="left:2.0px;top:2.0px;width:69px;height:140px;border:1px solid #000;box-sizing:border-box;background:linear-gradient(#dedede,#c4c4c4 40%,#a4a4a4)"></div>
<div class="a" style="left:11.0px;top:3.0px;width:46px;height:16px;background:#efefef"></div>
<div class="a t" style="left:6.2px;top:4.0px;line-height:14px;font-size:13px;width:60px;text-align:center;font-weight:bold;color:#0000ff;letter-spacing:0.336px;">-50.0</div>
<div class="a" style="left:34.0px;top:22.0px;width:5px;height:120px;background:#f4f4f4"></div>
<div class="a" style="left:26.0px;top:23.2px;width:9px;height:1.5px;background:#000"></div>
<div class="a" style="left:39.0px;top:23.2px;width:8px;height:1.5px;background:#000"></div>
<div class="a" style="left:31.0px;top:28.0px;width:4px;height:1px;background:#000"></div>
<div class="a" style="left:39.0px;top:28.0px;width:3px;height:1px;background:#000"></div>
<div class="a" style="left:31.0px;top:32.0px;width:4px;height:1px;background:#000"></div>
<div class="a" style="left:39.0px;top:32.0px;width:3px;height:1px;background:#000"></div>
<div class="a" style="left:31.0px;top:37.0px;width:4px;height:1px;background:#000"></div>
<div class="a" style="left:39.0px;top:37.0px;width:3px;height:1px;background:#000"></div>
<div class="a" style="left:31.0px;top:41.0px;width:4px;height:1px;background:#000"></div>
<div class="a" style="left:39.0px;top:41.0px;width:3px;height:1px;background:#000"></div>
<div class="a" style="left:26.0px;top:44.2px;width:9px;height:1.5px;background:#000"></div>
<div class="a" style="left:39.0px;top:44.2px;width:8px;height:1.5px;background:#000"></div>
<div class="a" style="left:31.0px;top:49.0px;width:4px;height:1px;background:#000"></div>
<div class="a" style="left:39.0px;top:49.0px;width:3px;height:1px;background:#000"></div>
<div class="a" style="left:31.0px;top:53.0px;width:4px;height:1px;background:#000"></div>
<div class="a" style="left:39.0px;top:53.0px;width:3px;height:1px;background:#000"></div>
<div class="a" style="left:31.0px;top:58.0px;width:4px;height:1px;background:#000"></div>
<div class="a" style="left:39.0px;top:58.0px;width:3px;height:1px;background:#000"></div>
<div class="a" style="left:31.0px;top:62.0px;width:4px;height:1px;background:#000"></div>
<div class="a" style="left:39.0px;top:62.0px;width:3px;height:1px;background:#000"></div>
<div class="a" style="left:26.0px;top:66.2px;width:9px;height:1.5px;background:#000"></div>
<div class="a" style="left:39.0px;top:66.2px;width:8px;height:1.5px;background:#000"></div>
<div class="a" style="left:31.0px;top:70.0px;width:4px;height:1px;background:#000"></div>
<div class="a" style="left:39.0px;top:70.0px;width:3px;height:1px;background:#000"></div>
<div class="a" style="left:31.0px;top:75.0px;width:4px;height:1px;background:#000"></div>
<div class="a" style="left:39.0px;top:75.0px;width:3px;height:1px;background:#000"></div>
<div class="a" style="left:31.0px;top:79.0px;width:4px;height:1px;background:#000"></div>
<div class="a" style="left:39.0px;top:79.0px;width:3px;height:1px;background:#000"></div>
<div class="a" style="left:31.0px;top:83.0px;width:4px;height:1px;background:#000"></div>
<div class="a" style="left:39.0px;top:83.0px;width:3px;height:1px;background:#000"></div>
<div class="a" style="left:26.0px;top:87.2px;width:9px;height:1.5px;background:#000"></div>
<div class="a" style="left:39.0px;top:87.2px;width:8px;height:1.5px;background:#000"></div>
<div class="a" style="left:31.0px;top:92.0px;width:4px;height:1px;background:#000"></div>
<div class="a" style="left:39.0px;top:92.0px;width:3px;height:1px;background:#000"></div>
<div class="a" style="left:31.0px;top:96.0px;width:4px;height:1px;background:#000"></div>
<div class="a" style="left:39.0px;top:96.0px;width:3px;height:1px;background:#000"></div>
<div class="a" style="left:31.0px;top:100.0px;width:4px;height:1px;background:#000"></div>
<div class="a" style="left:39.0px;top:100.0px;width:3px;height:1px;background:#000"></div>
<div class="a" style="left:31.0px;top:104.0px;width:4px;height:1px;background:#000"></div>
<div class="a" style="left:39.0px;top:104.0px;width:3px;height:1px;background:#000"></div>
<div class="a" style="left:26.0px;top:108.2px;width:9px;height:1.5px;background:#000"></div>
<div class="a" style="left:39.0px;top:108.2px;width:8px;height:1.5px;background:#000"></div>
<div class="a" style="left:31.0px;top:113.0px;width:4px;height:1px;background:#000"></div>
<div class="a" style="left:39.0px;top:113.0px;width:3px;height:1px;background:#000"></div>
<div class="a" style="left:31.0px;top:117.0px;width:4px;height:1px;background:#000"></div>
<div class="a" style="left:39.0px;top:117.0px;width:3px;height:1px;background:#000"></div>
<div class="a" style="left:31.0px;top:121.0px;width:4px;height:1px;background:#000"></div>
<div class="a" style="left:39.0px;top:121.0px;width:3px;height:1px;background:#000"></div>
<div class="a" style="left:31.0px;top:126.0px;width:4px;height:1px;background:#000"></div>
<div class="a" style="left:39.0px;top:126.0px;width:3px;height:1px;background:#000"></div>
<div class="a" style="left:26.0px;top:129.2px;width:9px;height:1.5px;background:#000"></div>
<div class="a" style="left:39.0px;top:129.2px;width:8px;height:1.5px;background:#000"></div>
<div class="a" style="left:31.0px;top:134.0px;width:4px;height:1px;background:#000"></div>
<div class="a" style="left:39.0px;top:134.0px;width:3px;height:1px;background:#000"></div>
<div class="a" style="left:31.0px;top:138.0px;width:4px;height:1px;background:#000"></div>
<div class="a" style="left:39.0px;top:138.0px;width:3px;height:1px;background:#000"></div>
<div class="a" style="left:31.0px;top:143.0px;width:4px;height:1px;background:#000"></div>
<div class="a" style="left:39.0px;top:143.0px;width:3px;height:1px;background:#000"></div>
<div class="a" style="left:31.0px;top:147.0px;width:4px;height:1px;background:#000"></div>
<div class="a" style="left:39.0px;top:147.0px;width:3px;height:1px;background:#000"></div>
<div class="a" style="left:26.0px;top:150.2px;width:9px;height:1.5px;background:#000"></div>
<div class="a" style="left:39.0px;top:150.2px;width:8px;height:1.5px;background:#000"></div>
<div class="a t" style="left:0.5px;top:18.3px;line-height:12px;font-size:11px;width:21.5px;text-align:right;">120</div>
<div class="a t" style="left:51.5px;top:18.3px;line-height:12px;font-size:11px;">120</div>
<div class="a t" style="left:0.5px;top:39.5px;line-height:12px;font-size:11px;width:21.5px;text-align:right;">88</div>
<div class="a t" style="left:51.5px;top:39.5px;line-height:12px;font-size:11px;">88</div>
<div class="a t" style="left:0.5px;top:60.7px;line-height:12px;font-size:11px;width:21.5px;text-align:right;">56</div>
<div class="a t" style="left:51.5px;top:60.7px;line-height:12px;font-size:11px;">56</div>
<div class="a t" style="left:0.5px;top:81.9px;line-height:12px;font-size:11px;width:21.5px;text-align:right;">24</div>
<div class="a t" style="left:51.5px;top:81.9px;line-height:12px;font-size:11px;">24</div>
<div class="a t" style="left:0.5px;top:103.1px;line-height:12px;font-size:11px;width:21.5px;text-align:right;">-8</div>
<div class="a t" style="left:51.5px;top:103.1px;line-height:12px;font-size:11px;">-8</div>
<div class="a t" style="left:0.5px;top:124.3px;line-height:12px;font-size:11px;width:21.5px;text-align:right;">-40</div>
<div class="a t" style="left:51.5px;top:124.3px;line-height:12px;font-size:11px;">-40</div>
<svg class="a" style="left:39.0px;top:105.0px;" width="11" height="8" viewBox="0 0 11 8"><path d="M0.5 7.5 L10.5 0.5 V7.5 Z" fill="#ffff00" stroke="#000" stroke-width="0.8"/></svg>
<div class="a" style="left:70.0px;top:2.0px;width:69px;height:140px;border:1px solid #000;box-sizing:border-box;background:linear-gradient(#dedede,#c4c4c4 40%,#a4a4a4)"></div>
<div class="a" style="left:79.0px;top:3.0px;width:46px;height:16px;background:#efefef"></div>
<div class="a t" style="left:74.2px;top:4.0px;line-height:14px;font-size:13px;width:60px;text-align:center;font-weight:bold;color:#0000ff;letter-spacing:0.336px;">-50.0</div>
<div class="a" style="left:102.0px;top:22.0px;width:5px;height:120px;background:#f4f4f4"></div>
<div class="a" style="left:94.0px;top:23.2px;width:9px;height:1.5px;background:#000"></div>
<div class="a" style="left:107.0px;top:23.2px;width:8px;height:1.5px;background:#000"></div>
<div class="a" style="left:99.0px;top:28.0px;width:4px;height:1px;background:#000"></div>
<div class="a" style="left:107.0px;top:28.0px;width:3px;height:1px;background:#000"></div>
<div class="a" style="left:99.0px;top:32.0px;width:4px;height:1px;background:#000"></div>
<div class="a" style="left:107.0px;top:32.0px;width:3px;height:1px;background:#000"></div>
<div class="a" style="left:99.0px;top:37.0px;width:4px;height:1px;background:#000"></div>
<div class="a" style="left:107.0px;top:37.0px;width:3px;height:1px;background:#000"></div>
<div class="a" style="left:99.0px;top:41.0px;width:4px;height:1px;background:#000"></div>
<div class="a" style="left:107.0px;top:41.0px;width:3px;height:1px;background:#000"></div>
<div class="a" style="left:94.0px;top:44.2px;width:9px;height:1.5px;background:#000"></div>
<div class="a" style="left:107.0px;top:44.2px;width:8px;height:1.5px;background:#000"></div>
<div class="a" style="left:99.0px;top:49.0px;width:4px;height:1px;background:#000"></div>
<div class="a" style="left:107.0px;top:49.0px;width:3px;height:1px;background:#000"></div>
<div class="a" style="left:99.0px;top:53.0px;width:4px;height:1px;background:#000"></div>
<div class="a" style="left:107.0px;top:53.0px;width:3px;height:1px;background:#000"></div>
<div class="a" style="left:99.0px;top:58.0px;width:4px;height:1px;background:#000"></div>
<div class="a" style="left:107.0px;top:58.0px;width:3px;height:1px;background:#000"></div>
<div class="a" style="left:99.0px;top:62.0px;width:4px;height:1px;background:#000"></div>
<div class="a" style="left:107.0px;top:62.0px;width:3px;height:1px;background:#000"></div>
<div class="a" style="left:94.0px;top:66.2px;width:9px;height:1.5px;background:#000"></div>
<div class="a" style="left:107.0px;top:66.2px;width:8px;height:1.5px;background:#000"></div>
<div class="a" style="left:99.0px;top:70.0px;width:4px;height:1px;background:#000"></div>
<div class="a" style="left:107.0px;top:70.0px;width:3px;height:1px;background:#000"></div>
<div class="a" style="left:99.0px;top:75.0px;width:4px;height:1px;background:#000"></div>
<div class="a" style="left:107.0px;top:75.0px;width:3px;height:1px;background:#000"></div>
<div class="a" style="left:99.0px;top:79.0px;width:4px;height:1px;background:#000"></div>
<div class="a" style="left:107.0px;top:79.0px;width:3px;height:1px;background:#000"></div>
<div class="a" style="left:99.0px;top:83.0px;width:4px;height:1px;background:#000"></div>
<div class="a" style="left:107.0px;top:83.0px;width:3px;height:1px;background:#000"></div>
<div class="a" style="left:94.0px;top:87.2px;width:9px;height:1.5px;background:#000"></div>
<div class="a" style="left:107.0px;top:87.2px;width:8px;height:1.5px;background:#000"></div>
<div class="a" style="left:99.0px;top:92.0px;width:4px;height:1px;background:#000"></div>
<div class="a" style="left:107.0px;top:92.0px;width:3px;height:1px;background:#000"></div>
<div class="a" style="left:99.0px;top:96.0px;width:4px;height:1px;background:#000"></div>
<div class="a" style="left:107.0px;top:96.0px;width:3px;height:1px;background:#000"></div>
<div class="a" style="left:99.0px;top:100.0px;width:4px;height:1px;background:#000"></div>
<div class="a" style="left:107.0px;top:100.0px;width:3px;height:1px;background:#000"></div>
<div class="a" style="left:99.0px;top:104.0px;width:4px;height:1px;background:#000"></div>
<div class="a" style="left:107.0px;top:104.0px;width:3px;height:1px;background:#000"></div>
<div class="a" style="left:94.0px;top:108.2px;width:9px;height:1.5px;background:#000"></div>
<div class="a" style="left:107.0px;top:108.2px;width:8px;height:1.5px;background:#000"></div>
<div class="a" style="left:99.0px;top:113.0px;width:4px;height:1px;background:#000"></div>
<div class="a" style="left:107.0px;top:113.0px;width:3px;height:1px;background:#000"></div>
<div class="a" style="left:99.0px;top:117.0px;width:4px;height:1px;background:#000"></div>
<div class="a" style="left:107.0px;top:117.0px;width:3px;height:1px;background:#000"></div>
<div class="a" style="left:99.0px;top:121.0px;width:4px;height:1px;background:#000"></div>
<div class="a" style="left:107.0px;top:121.0px;width:3px;height:1px;background:#000"></div>
<div class="a" style="left:99.0px;top:126.0px;width:4px;height:1px;background:#000"></div>
<div class="a" style="left:107.0px;top:126.0px;width:3px;height:1px;background:#000"></div>
<div class="a" style="left:94.0px;top:129.2px;width:9px;height:1.5px;background:#000"></div>
<div class="a" style="left:107.0px;top:129.2px;width:8px;height:1.5px;background:#000"></div>
<div class="a" style="left:99.0px;top:134.0px;width:4px;height:1px;background:#000"></div>
<div class="a" style="left:107.0px;top:134.0px;width:3px;height:1px;background:#000"></div>
<div class="a" style="left:99.0px;top:138.0px;width:4px;height:1px;background:#000"></div>
<div class="a" style="left:107.0px;top:138.0px;width:3px;height:1px;background:#000"></div>
<div class="a" style="left:99.0px;top:143.0px;width:4px;height:1px;background:#000"></div>
<div class="a" style="left:107.0px;top:143.0px;width:3px;height:1px;background:#000"></div>
<div class="a" style="left:99.0px;top:147.0px;width:4px;height:1px;background:#000"></div>
<div class="a" style="left:107.0px;top:147.0px;width:3px;height:1px;background:#000"></div>
<div class="a" style="left:94.0px;top:150.2px;width:9px;height:1.5px;background:#000"></div>
<div class="a" style="left:107.0px;top:150.2px;width:8px;height:1.5px;background:#000"></div>
<div class="a t" style="left:68.5px;top:18.3px;line-height:12px;font-size:11px;width:21.5px;text-align:right;">120</div>
<div class="a t" style="left:119.5px;top:18.3px;line-height:12px;font-size:11px;">120</div>
<div class="a t" style="left:68.5px;top:39.5px;line-height:12px;font-size:11px;width:21.5px;text-align:right;">88</div>
<div class="a t" style="left:119.5px;top:39.5px;line-height:12px;font-size:11px;">88</div>
<div class="a t" style="left:68.5px;top:60.7px;line-height:12px;font-size:11px;width:21.5px;text-align:right;">56</div>
<div class="a t" style="left:119.5px;top:60.7px;line-height:12px;font-size:11px;">56</div>
<div class="a t" style="left:68.5px;top:81.9px;line-height:12px;font-size:11px;width:21.5px;text-align:right;">24</div>
<div class="a t" style="left:119.5px;top:81.9px;line-height:12px;font-size:11px;">24</div>
<div class="a t" style="left:68.5px;top:103.1px;line-height:12px;font-size:11px;width:21.5px;text-align:right;">-8</div>
<div class="a t" style="left:119.5px;top:103.1px;line-height:12px;font-size:11px;">-8</div>
<div class="a t" style="left:68.5px;top:124.3px;line-height:12px;font-size:11px;width:21.5px;text-align:right;">-40</div>
<div class="a t" style="left:119.5px;top:124.3px;line-height:12px;font-size:11px;">-40</div>
<svg class="a" style="left:107.0px;top:105.0px;" width="11" height="8" viewBox="0 0 11 8"><path d="M0.5 7.5 L10.5 0.5 V7.5 Z" fill="#ffff00" stroke="#000" stroke-width="0.8"/></svg>
<div class="a" style="left:138.0px;top:2.0px;width:69px;height:140px;border:1px solid #000;box-sizing:border-box;background:linear-gradient(#dedede,#c4c4c4 40%,#a4a4a4)"></div>
<div class="a" style="left:147.0px;top:3.0px;width:46px;height:16px;background:#efefef"></div>
<div class="a t" style="left:142.2px;top:4.0px;line-height:14px;font-size:13px;width:60px;text-align:center;font-weight:bold;color:#0000ff;letter-spacing:0.336px;">-50.0</div>
<div class="a" style="left:170.0px;top:22.0px;width:5px;height:120px;background:#f4f4f4"></div>
<div class="a" style="left:162.0px;top:23.2px;width:9px;height:1.5px;background:#000"></div>
<div class="a" style="left:175.0px;top:23.2px;width:8px;height:1.5px;background:#000"></div>
<div class="a" style="left:167.0px;top:28.0px;width:4px;height:1px;background:#000"></div>
<div class="a" style="left:175.0px;top:28.0px;width:3px;height:1px;background:#000"></div>
<div class="a" style="left:167.0px;top:32.0px;width:4px;height:1px;background:#000"></div>
<div class="a" style="left:175.0px;top:32.0px;width:3px;height:1px;background:#000"></div>
<div class="a" style="left:167.0px;top:37.0px;width:4px;height:1px;background:#000"></div>
<div class="a" style="left:175.0px;top:37.0px;width:3px;height:1px;background:#000"></div>
<div class="a" style="left:167.0px;top:41.0px;width:4px;height:1px;background:#000"></div>
<div class="a" style="left:175.0px;top:41.0px;width:3px;height:1px;background:#000"></div>
<div class="a" style="left:162.0px;top:44.2px;width:9px;height:1.5px;background:#000"></div>
<div class="a" style="left:175.0px;top:44.2px;width:8px;height:1.5px;background:#000"></div>
<div class="a" style="left:167.0px;top:49.0px;width:4px;height:1px;background:#000"></div>
<div class="a" style="left:175.0px;top:49.0px;width:3px;height:1px;background:#000"></div>
<div class="a" style="left:167.0px;top:53.0px;width:4px;height:1px;background:#000"></div>
<div class="a" style="left:175.0px;top:53.0px;width:3px;height:1px;background:#000"></div>
<div class="a" style="left:167.0px;top:58.0px;width:4px;height:1px;background:#000"></div>
<div class="a" style="left:175.0px;top:58.0px;width:3px;height:1px;background:#000"></div>
<div class="a" style="left:167.0px;top:62.0px;width:4px;height:1px;background:#000"></div>
<div class="a" style="left:175.0px;top:62.0px;width:3px;height:1px;background:#000"></div>
<div class="a" style="left:162.0px;top:66.2px;width:9px;height:1.5px;background:#000"></div>
<div class="a" style="left:175.0px;top:66.2px;width:8px;height:1.5px;background:#000"></div>
<div class="a" style="left:167.0px;top:70.0px;width:4px;height:1px;background:#000"></div>
<div class="a" style="left:175.0px;top:70.0px;width:3px;height:1px;background:#000"></div>
<div class="a" style="left:167.0px;top:75.0px;width:4px;height:1px;background:#000"></div>
<div class="a" style="left:175.0px;top:75.0px;width:3px;height:1px;background:#000"></div>
<div class="a" style="left:167.0px;top:79.0px;width:4px;height:1px;background:#000"></div>
<div class="a" style="left:175.0px;top:79.0px;width:3px;height:1px;background:#000"></div>
<div class="a" style="left:167.0px;top:83.0px;width:4px;height:1px;background:#000"></div>
<div class="a" style="left:175.0px;top:83.0px;width:3px;height:1px;background:#000"></div>
<div class="a" style="left:162.0px;top:87.2px;width:9px;height:1.5px;background:#000"></div>
<div class="a" style="left:175.0px;top:87.2px;width:8px;height:1.5px;background:#000"></div>
<div class="a" style="left:167.0px;top:92.0px;width:4px;height:1px;background:#000"></div>
<div class="a" style="left:175.0px;top:92.0px;width:3px;height:1px;background:#000"></div>
<div class="a" style="left:167.0px;top:96.0px;width:4px;height:1px;background:#000"></div>
<div class="a" style="left:175.0px;top:96.0px;width:3px;height:1px;background:#000"></div>
<div class="a" style="left:167.0px;top:100.0px;width:4px;height:1px;background:#000"></div>
<div class="a" style="left:175.0px;top:100.0px;width:3px;height:1px;background:#000"></div>
<div class="a" style="left:167.0px;top:104.0px;width:4px;height:1px;background:#000"></div>
<div class="a" style="left:175.0px;top:104.0px;width:3px;height:1px;background:#000"></div>
<div class="a" style="left:162.0px;top:108.2px;width:9px;height:1.5px;background:#000"></div>
<div class="a" style="left:175.0px;top:108.2px;width:8px;height:1.5px;background:#000"></div>
<div class="a" style="left:167.0px;top:113.0px;width:4px;height:1px;background:#000"></div>
<div class="a" style="left:175.0px;top:113.0px;width:3px;height:1px;background:#000"></div>
<div class="a" style="left:167.0px;top:117.0px;width:4px;height:1px;background:#000"></div>
<div class="a" style="left:175.0px;top:117.0px;width:3px;height:1px;background:#000"></div>
<div class="a" style="left:167.0px;top:121.0px;width:4px;height:1px;background:#000"></div>
<div class="a" style="left:175.0px;top:121.0px;width:3px;height:1px;background:#000"></div>
<div class="a" style="left:167.0px;top:126.0px;width:4px;height:1px;background:#000"></div>
<div class="a" style="left:175.0px;top:126.0px;width:3px;height:1px;background:#000"></div>
<div class="a" style="left:162.0px;top:129.2px;width:9px;height:1.5px;background:#000"></div>
<div class="a" style="left:175.0px;top:129.2px;width:8px;height:1.5px;background:#000"></div>
<div class="a" style="left:167.0px;top:134.0px;width:4px;height:1px;background:#000"></div>
<div class="a" style="left:175.0px;top:134.0px;width:3px;height:1px;background:#000"></div>
<div class="a" style="left:167.0px;top:138.0px;width:4px;height:1px;background:#000"></div>
<div class="a" style="left:175.0px;top:138.0px;width:3px;height:1px;background:#000"></div>
<div class="a" style="left:167.0px;top:143.0px;width:4px;height:1px;background:#000"></div>
<div class="a" style="left:175.0px;top:143.0px;width:3px;height:1px;background:#000"></div>
<div class="a" style="left:167.0px;top:147.0px;width:4px;height:1px;background:#000"></div>
<div class="a" style="left:175.0px;top:147.0px;width:3px;height:1px;background:#000"></div>
<div class="a" style="left:162.0px;top:150.2px;width:9px;height:1.5px;background:#000"></div>
<div class="a" style="left:175.0px;top:150.2px;width:8px;height:1.5px;background:#000"></div>
<div class="a t" style="left:136.5px;top:18.3px;line-height:12px;font-size:11px;width:21.5px;text-align:right;">120</div>
<div class="a t" style="left:187.5px;top:18.3px;line-height:12px;font-size:11px;">120</div>
<div class="a t" style="left:136.5px;top:39.5px;line-height:12px;font-size:11px;width:21.5px;text-align:right;">88</div>
<div class="a t" style="left:187.5px;top:39.5px;line-height:12px;font-size:11px;">88</div>
<div class="a t" style="left:136.5px;top:60.7px;line-height:12px;font-size:11px;width:21.5px;text-align:right;">56</div>
<div class="a t" style="left:187.5px;top:60.7px;line-height:12px;font-size:11px;">56</div>
<div class="a t" style="left:136.5px;top:81.9px;line-height:12px;font-size:11px;width:21.5px;text-align:right;">24</div>
<div class="a t" style="left:187.5px;top:81.9px;line-height:12px;font-size:11px;">24</div>
<div class="a t" style="left:136.5px;top:103.1px;line-height:12px;font-size:11px;width:21.5px;text-align:right;">-8</div>
<div class="a t" style="left:187.5px;top:103.1px;line-height:12px;font-size:11px;">-8</div>
<div class="a t" style="left:136.5px;top:124.3px;line-height:12px;font-size:11px;width:21.5px;text-align:right;">-40</div>
<div class="a t" style="left:187.5px;top:124.3px;line-height:12px;font-size:11px;">-40</div>
<svg class="a" style="left:175.0px;top:105.0px;" width="11" height="8" viewBox="0 0 11 8"><path d="M0.5 7.5 L10.5 0.5 V7.5 Z" fill="#ffff00" stroke="#000" stroke-width="0.8"/></svg>
<div class="a" style="left:206.0px;top:2.0px;width:69px;height:140px;border:1px solid #000;box-sizing:border-box;background:linear-gradient(#dedede,#c4c4c4 40%,#a4a4a4)"></div>
<div class="a" style="left:215.0px;top:3.0px;width:46px;height:16px;background:#efefef"></div>
<div class="a t" style="left:210.2px;top:4.0px;line-height:14px;font-size:13px;width:60px;text-align:center;font-weight:bold;color:#0000ff;letter-spacing:0.336px;">-50.0</div>
<div class="a" style="left:238.0px;top:22.0px;width:5px;height:120px;background:#f4f4f4"></div>
<div class="a" style="left:230.0px;top:23.2px;width:9px;height:1.5px;background:#000"></div>
<div class="a" style="left:243.0px;top:23.2px;width:8px;height:1.5px;background:#000"></div>
<div class="a" style="left:235.0px;top:28.0px;width:4px;height:1px;background:#000"></div>
<div class="a" style="left:243.0px;top:28.0px;width:3px;height:1px;background:#000"></div>
<div class="a" style="left:235.0px;top:32.0px;width:4px;height:1px;background:#000"></div>
<div class="a" style="left:243.0px;top:32.0px;width:3px;height:1px;background:#000"></div>
<div class="a" style="left:235.0px;top:37.0px;width:4px;height:1px;background:#000"></div>
<div class="a" style="left:243.0px;top:37.0px;width:3px;height:1px;background:#000"></div>
<div class="a" style="left:235.0px;top:41.0px;width:4px;height:1px;background:#000"></div>
<div class="a" style="left:243.0px;top:41.0px;width:3px;height:1px;background:#000"></div>
<div class="a" style="left:230.0px;top:44.2px;width:9px;height:1.5px;background:#000"></div>
<div class="a" style="left:243.0px;top:44.2px;width:8px;height:1.5px;background:#000"></div>
<div class="a" style="left:235.0px;top:49.0px;width:4px;height:1px;background:#000"></div>
<div class="a" style="left:243.0px;top:49.0px;width:3px;height:1px;background:#000"></div>
<div class="a" style="left:235.0px;top:53.0px;width:4px;height:1px;background:#000"></div>
<div class="a" style="left:243.0px;top:53.0px;width:3px;height:1px;background:#000"></div>
<div class="a" style="left:235.0px;top:58.0px;width:4px;height:1px;background:#000"></div>
<div class="a" style="left:243.0px;top:58.0px;width:3px;height:1px;background:#000"></div>
<div class="a" style="left:235.0px;top:62.0px;width:4px;height:1px;background:#000"></div>
<div class="a" style="left:243.0px;top:62.0px;width:3px;height:1px;background:#000"></div>
<div class="a" style="left:230.0px;top:66.2px;width:9px;height:1.5px;background:#000"></div>
<div class="a" style="left:243.0px;top:66.2px;width:8px;height:1.5px;background:#000"></div>
<div class="a" style="left:235.0px;top:70.0px;width:4px;height:1px;background:#000"></div>
<div class="a" style="left:243.0px;top:70.0px;width:3px;height:1px;background:#000"></div>
<div class="a" style="left:235.0px;top:75.0px;width:4px;height:1px;background:#000"></div>
<div class="a" style="left:243.0px;top:75.0px;width:3px;height:1px;background:#000"></div>
<div class="a" style="left:235.0px;top:79.0px;width:4px;height:1px;background:#000"></div>
<div class="a" style="left:243.0px;top:79.0px;width:3px;height:1px;background:#000"></div>
<div class="a" style="left:235.0px;top:83.0px;width:4px;height:1px;background:#000"></div>
<div class="a" style="left:243.0px;top:83.0px;width:3px;height:1px;background:#000"></div>
<div class="a" style="left:230.0px;top:87.2px;width:9px;height:1.5px;background:#000"></div>
<div class="a" style="left:243.0px;top:87.2px;width:8px;height:1.5px;background:#000"></div>
<div class="a" style="left:235.0px;top:92.0px;width:4px;height:1px;background:#000"></div>
<div class="a" style="left:243.0px;top:92.0px;width:3px;height:1px;background:#000"></div>
<div class="a" style="left:235.0px;top:96.0px;width:4px;height:1px;background:#000"></div>
<div class="a" style="left:243.0px;top:96.0px;width:3px;height:1px;background:#000"></div>
<div class="a" style="left:235.0px;top:100.0px;width:4px;height:1px;background:#000"></div>
<div class="a" style="left:243.0px;top:100.0px;width:3px;height:1px;background:#000"></div>
<div class="a" style="left:235.0px;top:104.0px;width:4px;height:1px;background:#000"></div>
<div class="a" style="left:243.0px;top:104.0px;width:3px;height:1px;background:#000"></div>
<div class="a" style="left:230.0px;top:108.2px;width:9px;height:1.5px;background:#000"></div>
<div class="a" style="left:243.0px;top:108.2px;width:8px;height:1.5px;background:#000"></div>
<div class="a" style="left:235.0px;top:113.0px;width:4px;height:1px;background:#000"></div>
<div class="a" style="left:243.0px;top:113.0px;width:3px;height:1px;background:#000"></div>
<div class="a" style="left:235.0px;top:117.0px;width:4px;height:1px;background:#000"></div>
<div class="a" style="left:243.0px;top:117.0px;width:3px;height:1px;background:#000"></div>
<div class="a" style="left:235.0px;top:121.0px;width:4px;height:1px;background:#000"></div>
<div class="a" style="left:243.0px;top:121.0px;width:3px;height:1px;background:#000"></div>
<div class="a" style="left:235.0px;top:126.0px;width:4px;height:1px;background:#000"></div>
<div class="a" style="left:243.0px;top:126.0px;width:3px;height:1px;background:#000"></div>
<div class="a" style="left:230.0px;top:129.2px;width:9px;height:1.5px;background:#000"></div>
<div class="a" style="left:243.0px;top:129.2px;width:8px;height:1.5px;background:#000"></div>
<div class="a" style="left:235.0px;top:134.0px;width:4px;height:1px;background:#000"></div>
<div class="a" style="left:243.0px;top:134.0px;width:3px;height:1px;background:#000"></div>
<div class="a" style="left:235.0px;top:138.0px;width:4px;height:1px;background:#000"></div>
<div class="a" style="left:243.0px;top:138.0px;width:3px;height:1px;background:#000"></div>
<div class="a" style="left:235.0px;top:143.0px;width:4px;height:1px;background:#000"></div>
<div class="a" style="left:243.0px;top:143.0px;width:3px;height:1px;background:#000"></div>
<div class="a" style="left:235.0px;top:147.0px;width:4px;height:1px;background:#000"></div>
<div class="a" style="left:243.0px;top:147.0px;width:3px;height:1px;background:#000"></div>
<div class="a" style="left:230.0px;top:150.2px;width:9px;height:1.5px;background:#000"></div>
<div class="a" style="left:243.0px;top:150.2px;width:8px;height:1.5px;background:#000"></div>
<div class="a t" style="left:204.5px;top:18.3px;line-height:12px;font-size:11px;width:21.5px;text-align:right;">120</div>
<div class="a t" style="left:255.5px;top:18.3px;line-height:12px;font-size:11px;">120</div>
<div class="a t" style="left:204.5px;top:39.5px;line-height:12px;font-size:11px;width:21.5px;text-align:right;">88</div>
<div class="a t" style="left:255.5px;top:39.5px;line-height:12px;font-size:11px;">88</div>
<div class="a t" style="left:204.5px;top:60.7px;line-height:12px;font-size:11px;width:21.5px;text-align:right;">56</div>
<div class="a t" style="left:255.5px;top:60.7px;line-height:12px;font-size:11px;">56</div>
<div class="a t" style="left:204.5px;top:81.9px;line-height:12px;font-size:11px;width:21.5px;text-align:right;">24</div>
<div class="a t" style="left:255.5px;top:81.9px;line-height:12px;font-size:11px;">24</div>
<div class="a t" style="left:204.5px;top:103.1px;line-height:12px;font-size:11px;width:21.5px;text-align:right;">-8</div>
<div class="a t" style="left:255.5px;top:103.1px;line-height:12px;font-size:11px;">-8</div>
<div class="a t" style="left:204.5px;top:124.3px;line-height:12px;font-size:11px;width:21.5px;text-align:right;">-40</div>
<div class="a t" style="left:255.5px;top:124.3px;line-height:12px;font-size:11px;">-40</div>
<svg class="a" style="left:243.0px;top:105.0px;" width="11" height="8" viewBox="0 0 11 8"><path d="M0.5 7.5 L10.5 0.5 V7.5 Z" fill="#ffff00" stroke="#000" stroke-width="0.8"/></svg>
</div>
<div class="a" style="left:1247px;top:548px;width:72px;height:130px;overflow:hidden">
<svg class="a" style="left:5.0px;top:9.0px;" width="14" height="13" viewBox="0 0 14 13"><path d="M7.0 0.5 L13.5 12.5 L0.5 12.5 Z" fill="#00e000" stroke="#00c000" stroke-width="1"/></svg>
<div class="a t" style="left:23.0px;top:9.0px;line-height:12px;font-size:11px;letter-spacing:-0.1px">GPRS Attached</div>
<svg class="a" style="left:5.0px;top:27.0px;" width="14" height="13" viewBox="0 0 14 13"><path d="M0.5 0.5 L13.5 6.5 L0.5 12.5 Z" fill="#00e000" stroke="#00c000" stroke-width="1"/></svg>
<div class="a t" style="left:23.0px;top:27.0px;line-height:12px;font-size:11px;letter-spacing:-0.25px">APN Active</div>
<div class="a" style="left:3.0px;top:45.0px;width:80px;height:39px;border:1px solid #000;box-sizing:border-box;box-shadow:inset 1px 1px 0 #fff, inset 0 -2px 0 #a0a0a0"></div>
<div class="a" style="left:32.0px;top:50.0px;width:34px;height:16px;background:#000"></div>
<div class="a t" style="left:32.0px;top:50.0px;width:34px;height:16px;line-height:16px;font-size:14px;font-weight:bold;color:#00ff00;text-align:center;letter-spacing:0.1px;">000</div>
<div class="a t" style="left:15.0px;top:68.0px;line-height:12px;font-size:11px;letter-spacing:-0.25px">SMS Received</div>
<div class="a" style="left:3.0px;top:85.0px;width:80px;height:40px;border:1px solid #000;box-sizing:border-box;box-shadow:inset 1px 1px 0 #fff, inset 0 -2px 0 #a0a0a0"></div>
<div class="a" style="left:20.0px;top:90.0px;width:70px;height:16px;background:#000"></div>
<div class="a t" style="left:25.5px;top:90.0px;height:16px;line-height:16px;font-size:14px;font-weight:bold;color:#00ff00;text-align:left;letter-spacing:0.1px;">0000012</div>
<div class="a t" style="left:7.0px;top:108.0px;line-height:12px;font-size:11px;letter-spacing:-0.2px">GPRS Packets</div>
</div>
<div class="a" style="left:1321px;top:69px;width:9px;height:611px;background:#d7e4f2;border-left:2px solid #707070;box-sizing:border-box"></div>
<div class="a" style="left:1330px;top:46px;width:1px;height:642px;background:#646464"></div>
<div class="a" style="left:1331px;top:38px;width:29px;height:654px;background:#f0f0f0"></div>
<div class="a" style="left:1344px;top:38px;width:1px;height:654px;background:#ffffff"></div>
<div class="a" style="left:1352px;top:63px;width:2px;height:590px;background:#8c8c8c"></div>
<div class="a" style="left:701px;top:679px;width:630px;height:9px;background:#d7e4f2;border-bottom:1px solid #646464;border-left:1px solid #646464;border-right:1px solid #646464;box-sizing:border-box"></div>
<div class="a" style="left:704px;top:679px;width:619px;height:1px;background:#a0a0a0"></div>
<div class="a" style="left:0px;top:688px;width:159px;height:4px;background:#d7e4f2;border-bottom:1px solid #646464;border-right:1px solid #646464;box-sizing:border-box"></div>
<div class="a" style="left:160px;top:688px;width:159px;height:4px;background:#d7e4f2;border-bottom:1px solid #646464;border-right:1px solid #646464;border-left:1px solid #646464;box-sizing:border-box"></div>
<div class="a" style="left:0px;top:692px;width:1360px;height:3px;background:#ffffff"></div>
<div class="a" style="left:0px;top:695px;width:1360px;height:1px;background:#a0a0a0"></div>
<div class="a" style="left:0px;top:696px;width:1360px;height:19px;background:#f0f0f0"></div>
<div class="a" style="left:0px;top:711px;width:1360px;height:1px;background:#ffffff"></div>
<div class="a" style="left:0px;top:712px;width:1360px;height:1px;background:#a0a0a0"></div>
<div class="a" style="left:0px;top:696px;width:99px;height:15px;background:#00ff00"></div>
<div class="a t" style="left:18px;top:696.5px;line-height:12px;font-size:11px;transform-origin:0 0;transform:scaleX(0.875)">CONNECTED</div>
<div class="a t" style="left:103px;top:696.5px;line-height:12px;font-size:11px;transform-origin:0 0;transform:scaleX(0.9)">PDUv0</div>
<div class="a t" style="left:151px;top:696.5px;line-height:12px;font-size:11px;">0</div>
<div class="a t" style="left:181px;top:696.5px;line-height:12px;font-size:11px;">0</div>
<div class="a t" style="left:211px;top:696.5px;line-height:12px;font-size:11px;">0</div>
<div class="a t" style="left:276px;top:696.5px;line-height:12px;font-size:11px;letter-spacing:-0.312px;">MHub846-2</div>
<div class="a t" style="left:1270px;top:696.5px;line-height:12px;font-size:11px;letter-spacing:-0.230px;">V1.48.35 [BETA]</div>
</body></html>
